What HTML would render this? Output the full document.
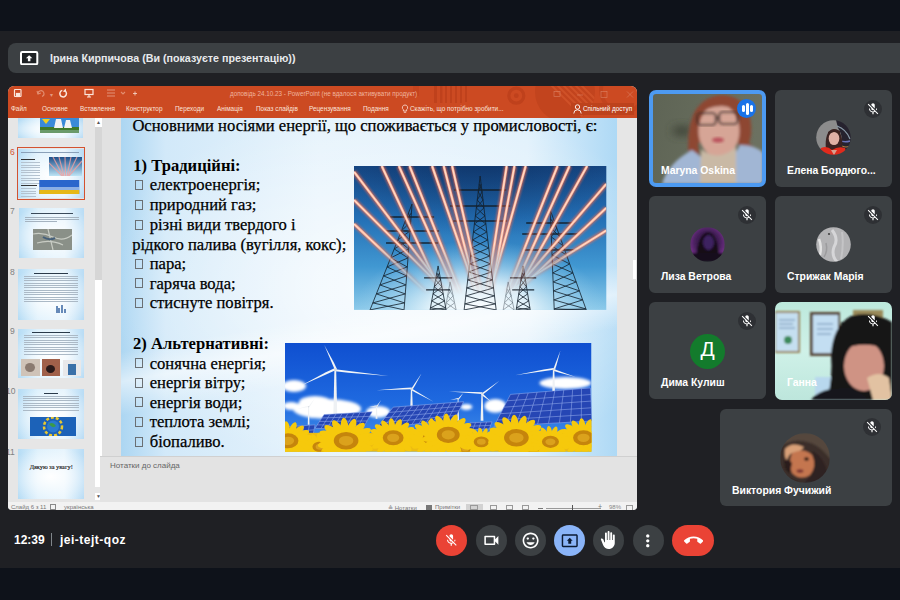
<!DOCTYPE html>
<html><head><meta charset="utf-8">
<style>
*{margin:0;padding:0;box-sizing:border-box}
html,body{width:900px;height:600px;overflow:hidden}
body{background:#1f2024;position:relative;font-family:"Liberation Sans",sans-serif}
.a{position:absolute}
.tile{position:absolute;background:#3c4043;border-radius:6px;overflow:hidden}
.nm{position:absolute;color:#fff;font-weight:bold;font-size:10.4px;white-space:nowrap;letter-spacing:0px}
.mute{position:absolute;width:18px;height:18px;border-radius:50%;background:#2e3034}
.btn{position:absolute;top:525px;width:31px;height:31px;border-radius:50%;background:#3c4043}
.rb{position:absolute;top:104px;font-size:6.4px;color:#fbe3da;white-space:nowrap}
.sl{position:absolute;font-family:"Liberation Serif",serif;font-size:16.6px;line-height:20px;color:#000;white-space:nowrap;-webkit-text-stroke:0.25px #000}
.bx{display:inline-block;width:10px;height:12px;border:1px solid #333;margin-right:6px;vertical-align:-1px}
</style></head><body>
<!-- top dark band -->
<div class="a" style="left:0;top:0;width:900px;height:31px;background:#0e121a"></div>
<!-- presenting banner -->
<div class="a" style="left:8px;top:43px;width:900px;height:30px;background:#3c4043;border-radius:8px"></div>
<svg class="a" style="left:20px;top:50.5px" width="18.5" height="14.5" viewBox="0 0 18.5 14.5">
  <rect x="1" y="1" width="16.3" height="12.3" rx="1.3" fill="#1e2124" stroke="#fff" stroke-width="2"/>
  <path d="M9.15 4.2 L5.9 7.3 H7.9 V10.3 H10.4 V7.3 H12.4 Z" fill="#fff"/>
</svg>
<div class="a" id="bnr" style="left:50px;top:52px;color:#e8eaed;font-size:10.7px;font-weight:bold;white-space:nowrap">Ірина Кирпичова (Ви (показуєте презентацію))</div>

<!-- PowerPoint window -->
<div class="a" id="ppt" style="left:8px;top:86px;width:629px;height:423.5px;background:#e6e6e6;border-radius:6px 6px 4px 4px;overflow:hidden">
  <!-- ribbon -->
  <div class="a" style="left:0;top:0;width:629px;height:32px;background:#cc4a22"></div>
  <!-- decorative circles right -->
  <svg class="a" style="left:0;top:0" width="629" height="32" viewBox="0 0 629 32">
    <defs><clipPath id="rc"><circle cx="557" cy="6" r="30"/></clipPath></defs>
    <g fill="#bf411c">
      <rect x="426" y="0" width="3" height="17"/><rect x="432" y="0" width="2.5" height="17"/><rect x="437" y="0" width="2" height="17"/>
      <rect x="442" y="0" width="2" height="17"/><rect x="447" y="0" width="2" height="17"/><rect x="452" y="0" width="2" height="17"/><rect x="457" y="0" width="2" height="16"/>
      <rect x="405" y="0" width="6" height="10" opacity="0.6"/>
    </g>
    <circle cx="508.3" cy="9.7" r="7.5" fill="none" stroke="#bf411c" stroke-width="3.2"/>
    <circle cx="508.3" cy="9.7" r="2.4" fill="#bf411c"/>
    <circle cx="557" cy="6" r="30" fill="#c2441e"/>
    <g clip-path="url(#rc)" stroke="#cf5128" stroke-width="2">
      <path d="M540 -10 L590 40 M546 -10 L596 40 M552 -10 L602 40 M558 -10 L608 40 M564 -10 L614 40 M534 -10 L584 40"/>
    </g>
    <circle cx="615" cy="4" r="22" fill="none" stroke="#c2441e" stroke-width="4"/>
  </svg>
  <!-- window controls -->
  <svg class="a" style="left:540px;top:4px" width="89" height="12" viewBox="0 0 89 12">
    <g fill="none" stroke="#e9a58c" stroke-width="0.7" opacity="0.55">
      <rect x="6" y="1.5" width="6" height="5"/>
      <line x1="29" y1="5" x2="35" y2="5"/>
      <rect x="53" y="1.5" width="6" height="6"/>
      <path d="M79 1.5 L85 7.5 M85 1.5 L79 7.5"/>
    </g>
  </svg>
  <!-- QAT icons -->
  <svg class="a" style="left:0;top:0" width="140" height="14" viewBox="0 0 140 14">
    <g fill="none" stroke="#fbe6dc" stroke-width="1.2">
      <rect x="6.5" y="3.5" width="6.5" height="7" rx="0.5"/>
      <rect x="8.5" y="7.5" width="3" height="3" fill="#fbe6dc"/>
      <path d="M57.2 5 A3.3 3.3 0 1 1 54.3 4.4" stroke-width="1.5"/>
      <path d="M57.8 2.6 L58.2 6.2 L54.8 5.4 Z" fill="#fbe6dc" stroke="none"/>
      <rect x="77" y="3.5" width="8" height="5"/>
      <path d="M81 8.5 V11 M79 11 H83"/>
    </g>
    <g fill="none" stroke="#e89f85" stroke-width="1.1" opacity="0.8">
      <path d="M30 8 a3 3 0 1 1 4 2.5"/><path d="M29 5 L30 8 L33 7"/>
      <line x1="99" y1="4" x2="107" y2="4"/><line x1="99" y1="7" x2="107" y2="7"/><line x1="99" y1="10" x2="107" y2="10"/>
      <path d="M113 6 l2 2 l2 -2"/>
    </g>
    <path d="M125 7.5 h4 M127 5.5 v4" stroke="#f3cfc1" stroke-width="0.9"/>
  </svg>
  <div class="a" style="left:42px;top:5px;font-size:6px;color:#e39a80">▾</div>
  <div class="a" style="left:222px;top:3.5px;font-size:6.3px;color:#f0b39c;white-space:nowrap">доповідь 24.10.23  -  PowerPoint (не вдалося активувати продукт)</div>
  <!-- menu row -->
  <div class="rb" style="left:3px;top:19px">Файл</div>
  <div class="rb" style="left:34px;top:19px">Основне</div>
  <div class="rb" style="left:72px;top:19px">Вставлення</div>
  <div class="rb" style="left:118px;top:19px">Конструктор</div>
  <div class="rb" style="left:167px;top:19px">Переходи</div>
  <div class="rb" style="left:209px;top:19px">Анімація</div>
  <div class="rb" style="left:248px;top:19px">Показ слайдів</div>
  <div class="rb" style="left:301px;top:19px">Рецензування</div>
  <div class="rb" style="left:355px;top:19px">Подання</div>
  <svg class="a" style="left:393px;top:18px" width="8" height="10" viewBox="0 0 8 10"><path d="M4 1 a2.6 2.6 0 0 1 1.6 4.7 V7 H2.4 V5.7 A2.6 2.6 0 0 1 4 1 Z M2.8 8.3 H5.2" fill="none" stroke="#fbe3da" stroke-width="0.8"/></svg>
  <div class="rb" style="left:402px;top:19px">Скажіть, що потрібно зробити...</div>
  <div class="a" style="left:563px;top:16.5px;width:63px;height:12px;background:#bd421c"></div>
  <svg class="a" style="left:565px;top:18px" width="9" height="10" viewBox="0 0 9 10"><circle cx="4.5" cy="3" r="2.2" fill="none" stroke="#fff" stroke-width="0.9"/><path d="M0.8 9.5 a3.7 3.7 0 0 1 7.4 0" fill="none" stroke="#fff" stroke-width="0.9"/></svg>
  <div class="rb" style="left:575px;top:19px;color:#fff">Спільний доступ</div>

  <!-- thumbnail pane -->
  <div class="a" style="left:0;top:32px;width:87px;height:384px;background:#e6e6e6"></div>
<!-- thumbs -->
  <div class="a" style="left:10.3px;top:32.0px;width:64.9px;height:19.5px;overflow:hidden;background:radial-gradient(ellipse 70% 60% at 50% 55%,#ffffff 0%,rgba(255,255,255,0) 100%),linear-gradient(90deg,#b5dcf5,#dcf0fc 30%,#e6f4fd 70%,#b8dcf5)"><svg class="a" style="left:22px;top:0" width="39" height="15" viewBox="0 0 39 15"><rect width="39" height="15" fill="#3a8ad8"/><rect y="9" width="39" height="6" fill="#3f7a2a"/><path d="M14 10 L16 1 H21 L23 10 Z M24 10 L26 2 H30 L32 10 Z" fill="#f2f2f2"/><path d="M2 1 L6 6 L10 1 Z" fill="#f0d020"/><rect y="12" width="39" height="3" fill="#6a9a6a"/></svg></div>
  <div class="a" style="left:8.8px;top:61.2px;width:68.4px;height:52.5px;border:1.6px solid #d35230"></div>
  <div class="a" style="left:10.4px;top:62.8px;width:65.2px;height:49.3px;overflow:hidden;background:radial-gradient(ellipse 70% 60% at 50% 55%,#ffffff 0%,rgba(255,255,255,0) 100%),linear-gradient(90deg,#b5dcf5,#dcf0fc 30%,#e6f4fd 70%,#b8dcf5)"><div class="a" style="left:3px;top:3.5px;width:58.0px;height:0.9px;background:#8aa0b8"></div><div class="a" style="left:3px;top:10.0px;width:14.0px;height:1.2px;background:#333"></div><div class="a" style="left:3px;top:13.5px;width:19.0px;height:0.7px;background:#b4c2cf"></div><div class="a" style="left:3px;top:16.1px;width:19.0px;height:0.7px;background:#b4c2cf"></div><div class="a" style="left:3px;top:18.6px;width:19.0px;height:0.7px;background:#b4c2cf"></div><div class="a" style="left:3px;top:21.1px;width:19.0px;height:0.7px;background:#b4c2cf"></div><div class="a" style="left:3px;top:23.7px;width:19.0px;height:0.7px;background:#b4c2cf"></div><div class="a" style="left:3px;top:26.2px;width:19.0px;height:0.7px;background:#b4c2cf"></div><div class="a" style="left:3px;top:28.8px;width:19.0px;height:0.7px;background:#b4c2cf"></div><div class="a" style="left:3px;top:31.3px;width:19.0px;height:0.7px;background:#b4c2cf"></div><div class="a" style="left:3px;top:33.9px;width:19.0px;height:0.7px;background:#b4c2cf"></div><div class="a" style="left:3px;top:36.0px;width:16.0px;height:1.2px;background:#333"></div><div class="a" style="left:3px;top:39.5px;width:15.0px;height:0.7px;background:#b4c2cf"></div><div class="a" style="left:3px;top:42.0px;width:15.0px;height:0.7px;background:#b4c2cf"></div><div class="a" style="left:3px;top:44.6px;width:15.0px;height:0.7px;background:#b4c2cf"></div><div class="a" style="left:3px;top:47.1px;width:15.0px;height:0.7px;background:#b4c2cf"></div><div class="a" style="left:3px;top:49.7px;width:15.0px;height:0.7px;background:#b4c2cf"></div><svg class="a" style="left:30.5px;top:8.5px" width="33" height="19" viewBox="0 0 33 19"><defs><linearGradient id="tg6" x1="0" y1="0" x2="0" y2="1"><stop offset="0" stop-color="#1d4f8a"/><stop offset="1" stop-color="#bde4f5"/></linearGradient></defs><rect width="33" height="19" fill="url(#tg6)"/><path d="M4 0 L14 19 M10 0 L15 19 M16 0 L16.5 19 M22 0 L18 19 M28 0 L19 19 M33 4 L20 19 M0 6 L13 19" stroke="#f0a0a0" stroke-width="1.2" opacity="0.8"/></svg><svg class="a" style="left:21px;top:31.5px" width="40.5" height="14" viewBox="0 0 40 14"><rect width="40" height="14" fill="#2a66cc"/><rect y="7" width="40" height="3" fill="#cde0f5" opacity="0.6"/><rect y="10" width="40" height="4" fill="#e6b818"/></svg></div>
  <div class="a" style="left:2px;top:60.5px;font-size:8.5px;color:#d35230">6</div>
  <div class="a" style="left:10.6px;top:122.0px;width:65.4px;height:50.0px;overflow:hidden;background:radial-gradient(ellipse 70% 60% at 50% 55%,#ffffff 0%,rgba(255,255,255,0) 100%),linear-gradient(90deg,#b5dcf5,#dcf0fc 30%,#e6f4fd 70%,#b8dcf5)"><div class="a" style="left:12px;top:5.0px;width:42.0px;height:1px;background:#3a4a5a"></div><div class="a" style="left:6px;top:8.5px;width:54.0px;height:0.7px;background:#a5b3c0"></div><div class="a" style="left:6px;top:10.9px;width:54.0px;height:0.7px;background:#a5b3c0"></div><div class="a" style="left:6px;top:13.3px;width:32.4px;height:0.7px;background:#a5b3c0"></div><svg class="a" style="left:14.5px;top:20.5px" width="39" height="21" viewBox="0 0 39 21"><rect width="39" height="21" fill="#8a9088"/><path d="M0 5 Q10 3 20 8 T39 6 M4 14 Q18 10 30 16 M15 0 L20 21" stroke="#c8ccc4" stroke-width="1.2" fill="none"/><path d="M10 8 Q16 12 22 9" stroke="#46607a" stroke-width="2" fill="none"/></svg></div>
  <div class="a" style="left:2px;top:120px;font-size:8.5px;color:#808080">7</div>
  <div class="a" style="left:10.4px;top:183.0px;width:65.6px;height:50.5px;overflow:hidden;background:radial-gradient(ellipse 70% 60% at 50% 55%,#ffffff 0%,rgba(255,255,255,0) 100%),linear-gradient(90deg,#b5dcf5,#dcf0fc 30%,#e6f4fd 70%,#b8dcf5)"><div class="a" style="left:16px;top:3.5px;width:34.0px;height:1px;background:#2a3a4a"></div><div class="a" style="left:6px;top:6.5px;width:54.0px;height:0.65px;background:#abb9c6"></div><div class="a" style="left:6px;top:8.8px;width:54.0px;height:0.65px;background:#abb9c6"></div><div class="a" style="left:6px;top:11.2px;width:54.0px;height:0.65px;background:#abb9c6"></div><div class="a" style="left:6px;top:13.6px;width:54.0px;height:0.65px;background:#abb9c6"></div><div class="a" style="left:6px;top:15.9px;width:54.0px;height:0.65px;background:#abb9c6"></div><div class="a" style="left:6px;top:18.2px;width:54.0px;height:0.65px;background:#abb9c6"></div><div class="a" style="left:6px;top:20.6px;width:54.0px;height:0.65px;background:#abb9c6"></div><div class="a" style="left:6px;top:22.9px;width:54.0px;height:0.65px;background:#abb9c6"></div><div class="a" style="left:6px;top:25.3px;width:54.0px;height:0.65px;background:#abb9c6"></div><div class="a" style="left:6px;top:27.7px;width:54.0px;height:0.65px;background:#abb9c6"></div><div class="a" style="left:6px;top:30.0px;width:54.0px;height:0.65px;background:#abb9c6"></div><div class="a" style="left:6px;top:32.4px;width:54.0px;height:0.65px;background:#abb9c6"></div><svg class="a" style="left:37px;top:35px" width="13" height="11" viewBox="0 0 13 11"><path d="M2 2 V9 M4 4 V9 M7 1 V9 M10 5 V9" stroke="#2a5a9a" stroke-width="1.4"/></svg></div>
  <div class="a" style="left:2px;top:180.5px;font-size:8.5px;color:#808080">8</div>
  <div class="a" style="left:10.4px;top:242.6px;width:65.6px;height:49.8px;overflow:hidden;background:radial-gradient(ellipse 70% 60% at 50% 55%,#ffffff 0%,rgba(255,255,255,0) 100%),linear-gradient(90deg,#b5dcf5,#dcf0fc 30%,#e6f4fd 70%,#b8dcf5)"><div class="a" style="left:14px;top:3.5px;width:38.0px;height:1px;background:#2a3a4a"></div><div class="a" style="left:6px;top:6.5px;width:54.0px;height:0.65px;background:#abb9c6"></div><div class="a" style="left:6px;top:8.8px;width:54.0px;height:0.65px;background:#abb9c6"></div><div class="a" style="left:6px;top:11.2px;width:54.0px;height:0.65px;background:#abb9c6"></div><div class="a" style="left:6px;top:13.6px;width:54.0px;height:0.65px;background:#abb9c6"></div><div class="a" style="left:6px;top:15.9px;width:54.0px;height:0.65px;background:#abb9c6"></div><div class="a" style="left:6px;top:18.2px;width:54.0px;height:0.65px;background:#abb9c6"></div><div class="a" style="left:6px;top:20.6px;width:54.0px;height:0.65px;background:#abb9c6"></div><div class="a" style="left:6px;top:22.9px;width:54.0px;height:0.65px;background:#abb9c6"></div><div class="a" style="left:6px;top:25.3px;width:54.0px;height:0.65px;background:#abb9c6"></div><div class="a" style="left:3px;top:30px;width:19px;height:17px;background:#cfc3b8"></div><div class="a" style="left:7px;top:34px;width:10px;height:9px;border-radius:50%;background:#8a7a70"></div><div class="a" style="left:24px;top:30px;width:18px;height:17px;background:#a0604a"></div><div class="a" style="left:28px;top:36px;width:9px;height:8px;border-radius:50%;background:#2a1a1a"></div><div class="a" style="left:45px;top:31px;width:18px;height:16px;background:#e8e8ea"></div><div class="a" style="left:50px;top:35px;width:8px;height:11px;background:#3a70a8"></div></div>
  <div class="a" style="left:2px;top:240px;font-size:8.5px;color:#808080">9</div>
  <div class="a" style="left:10.4px;top:303.0px;width:65.6px;height:50.0px;overflow:hidden;background:radial-gradient(ellipse 70% 60% at 50% 55%,#ffffff 0%,rgba(255,255,255,0) 100%),linear-gradient(90deg,#b5dcf5,#dcf0fc 30%,#e6f4fd 70%,#b8dcf5)"><div class="a" style="left:26px;top:3.5px;width:14.0px;height:1px;background:#2a3a4a"></div><div class="a" style="left:5px;top:6.5px;width:56.0px;height:0.65px;background:#abb9c6"></div><div class="a" style="left:5px;top:8.8px;width:56.0px;height:0.65px;background:#abb9c6"></div><div class="a" style="left:5px;top:11.2px;width:56.0px;height:0.65px;background:#abb9c6"></div><div class="a" style="left:5px;top:13.6px;width:56.0px;height:0.65px;background:#abb9c6"></div><div class="a" style="left:5px;top:15.9px;width:56.0px;height:0.65px;background:#abb9c6"></div><div class="a" style="left:5px;top:18.2px;width:56.0px;height:0.65px;background:#abb9c6"></div><div class="a" style="left:5px;top:20.6px;width:56.0px;height:0.65px;background:#abb9c6"></div><svg class="a" style="left:11.6px;top:27.8px" width="46" height="19" viewBox="0 0 46 19"><rect width="46" height="19" fill="#1c62b8"/><circle cx="23" cy="9.5" r="9" fill="none" stroke="#e8c830" stroke-width="2.5" stroke-dasharray="3 2"/><circle cx="23" cy="9.5" r="6" fill="#2a7ad0"/><path d="M19 7 Q23 4 26 9 Q22 12 19 7Z" fill="#3a9a4a"/></svg></div>
  <div class="a" style="left:-2px;top:300px;font-size:8.5px;color:#808080">10</div>
  <div class="a" style="left:10.4px;top:363.0px;width:65.6px;height:49.6px;overflow:hidden;background:radial-gradient(ellipse 70% 60% at 50% 55%,#ffffff 0%,rgba(255,255,255,0) 100%),linear-gradient(90deg,#b5dcf5,#dcf0fc 30%,#e6f4fd 70%,#b8dcf5)"><div class="a" style="left:0;top:14px;width:65.6px;text-align:center;font-family:'Liberation Serif',serif;font-size:6.3px;color:#1a1a1a;-webkit-text-stroke:0.15px #222;white-space:nowrap">Дякую за увагу!</div></div>
  <div class="a" style="left:-2px;top:360.5px;font-size:8.5px;color:#808080">11</div>
  <!-- /thumbs -->
  <!-- scrollbar -->
  <div class="a" style="left:87px;top:32px;width:7px;height:369px;background:#ffffff"></div>
  <div class="a" style="left:87px;top:41px;width:7px;height:153px;background:#d6d6d6"></div>
  <div class="a" style="left:87px;top:33px;width:7px;height:7px;background:#fff;font-size:5px;color:#555;text-align:center;line-height:7px">▲</div>
  <div class="a" style="left:87px;top:406.5px;width:7px;height:7px;background:#fff;font-size:5px;color:#555;text-align:center;line-height:7px">▼</div>
  <div class="a" style="left:94px;top:32px;width:19px;height:384px;background:#e1e1e1"></div>
  <!-- right gray + scrollbar -->
  <div class="a" style="left:609px;top:32px;width:20px;height:338px;background:#e6e6e6"></div>
  <div class="a" style="left:625px;top:174px;width:3px;height:19px;background:#fff"></div>
  <!-- notes -->
  <div class="a" style="left:92px;top:370px;width:537px;height:46px;background:#e3e3e3;border-top:1px solid #d0d0d0"></div>
  <div class="a" style="left:102px;top:375px;font-size:8px;color:#666;white-space:nowrap">Нотатки до слайда</div>
  <!-- status bar -->
  <div class="a" style="left:0;top:416px;width:629px;height:8px;background:#f2f2f2"></div>
  <div class="a" style="left:3px;top:417.5px;font-size:6px;color:#777;white-space:nowrap">Слайд 6 з 11</div>
  <div class="a" style="left:42px;top:418px;width:6px;height:6px;border:1px solid #888"></div>
  <div class="a" style="left:56px;top:417.5px;font-size:6px;color:#777;white-space:nowrap">українська</div>
  <div class="a" style="left:380px;top:418px;font-size:6px;color:#777;white-space:nowrap">≙ Нотатки</div>
  <div class="a" style="left:418px;top:419px;width:6px;height:5px;background:#777"></div>
  <div class="a" style="left:427px;top:418px;font-size:6px;color:#777;white-space:nowrap">Примітки</div>
  <div class="a" style="left:458px;top:418px;width:17px;height:8px;background:#d2d2d2"></div>
  <div class="a" style="left:462px;top:419px;width:8px;height:5px;border:1px solid #999"></div>
  <div class="a" style="left:482px;top:419px;width:7px;height:5px;border:1px solid #999"></div>
  <div class="a" style="left:498px;top:419px;width:7px;height:5px;border:1px solid #999"></div>
  <div class="a" style="left:514px;top:419px;width:7px;height:5px;border:1px solid #999"></div>
  <div class="a" style="left:530px;top:422px;width:5px;height:1px;background:#777"></div>
  <div class="a" style="left:538px;top:422px;width:55px;height:1px;background:#999"></div>
  <div class="a" style="left:564px;top:419px;width:1px;height:6px;background:#555"></div>
  <div class="a" style="left:590px;top:417px;font-size:7px;color:#777">+</div>
  <div class="a" style="left:601px;top:418px;font-size:6px;color:#888">98%</div>
  <div class="a" style="left:618px;top:419px;width:7px;height:6px;border:1px solid #999"></div>

  <!-- slide -->
  <div class="a" id="slide" style="left:113px;top:32px;width:496px;height:338px;overflow:hidden;
     background:linear-gradient(170deg,rgba(255,255,255,0) 55%,rgba(255,255,255,0.55) 62%,rgba(255,255,255,0) 70%),radial-gradient(ellipse 60% 55% at 55% 50%,rgba(255,255,255,0.75),rgba(255,255,255,0) 100%),linear-gradient(90deg,#acd6f2 0%,#d2e9f9 9%,#e6f3fc 40%,#e1f1fc 82%,#aed9f5 100%)">
    <div class="sl" style="left:11.4px;top:-1.8px;">Основними носіями енергії, що споживається у промисловості, є:</div>
    <div class="sl" style="left:12.3px;top:38.0px;font-weight:bold;-webkit-text-stroke:0;">1) Традиційні:</div>
    <div class="a" style="left:13.6px;top:62.0px;width:8px;height:10px;border:1px solid #6a6f73"></div>
    <div class="sl" style="left:28.7px;top:57.4px">електроенергія;</div>
    <div class="a" style="left:13.6px;top:81.8px;width:8px;height:10px;border:1px solid #6a6f73"></div>
    <div class="sl" style="left:28.7px;top:77.2px">природний газ;</div>
    <div class="a" style="left:13.6px;top:101.5px;width:8px;height:10px;border:1px solid #6a6f73"></div>
    <div class="sl" style="left:28.7px;top:96.9px">різні види твердого і</div>
    <div class="sl" style="left:11.2px;top:116.6px;">рідкого палива (вугілля, кокс);</div>
    <div class="a" style="left:13.6px;top:140.8px;width:8px;height:10px;border:1px solid #6a6f73"></div>
    <div class="sl" style="left:28.7px;top:136.2px">пара;</div>
    <div class="a" style="left:13.6px;top:160.4px;width:8px;height:10px;border:1px solid #6a6f73"></div>
    <div class="sl" style="left:28.7px;top:155.8px">гаряча вода;</div>
    <div class="a" style="left:13.6px;top:179.9px;width:8px;height:10px;border:1px solid #6a6f73"></div>
    <div class="sl" style="left:28.7px;top:175.3px">стиснуте повітря.</div>
    <div class="sl" style="left:12.0px;top:216.1px;font-weight:bold;-webkit-text-stroke:0;">2) Альтернативні:</div>
    <div class="a" style="left:13.6px;top:240.2px;width:8px;height:10px;border:1px solid #6a6f73"></div>
    <div class="sl" style="left:28.7px;top:235.6px">сонячна енергія;</div>
    <div class="a" style="left:13.6px;top:259.8px;width:8px;height:10px;border:1px solid #6a6f73"></div>
    <div class="sl" style="left:28.7px;top:255.2px">енергія вітру;</div>
    <div class="a" style="left:13.6px;top:279.4px;width:8px;height:10px;border:1px solid #6a6f73"></div>
    <div class="sl" style="left:28.7px;top:274.8px">енергія води;</div>
    <div class="a" style="left:13.6px;top:299.0px;width:8px;height:10px;border:1px solid #6a6f73"></div>
    <div class="sl" style="left:28.7px;top:294.4px">теплота землі;</div>
    <div class="a" style="left:13.6px;top:318.5px;width:8px;height:10px;border:1px solid #6a6f73"></div>
    <div class="sl" style="left:28.7px;top:313.9px">біопаливо.</div>
    <svg class="a" style="left:233.3px;top:48.4px" width="252.3" height="143.9" viewBox="0 0 252 144" preserveAspectRatio="none">
      <defs>
        <linearGradient id="sky1" x1="0" y1="0" x2="0" y2="1">
          <stop offset="0" stop-color="#164886"/>
          <stop offset="0.35" stop-color="#236eb4"/>
          <stop offset="0.7" stop-color="#4198d2"/>
          <stop offset="1" stop-color="#8ccaea"/>
        </linearGradient>
        <radialGradient id="glow1" cx="0.5" cy="1.02" r="0.5">
          <stop offset="0" stop-color="#ffffff" stop-opacity="1"/>
          <stop offset="0.4" stop-color="#f0f9fd" stop-opacity="0.85"/>
          <stop offset="1" stop-color="#9fd3ee" stop-opacity="0"/>
        </radialGradient>
        <radialGradient id="dk1" cx="0.5" cy="-0.1" r="0.6">
          <stop offset="0" stop-color="#061d45" stop-opacity="0.45"/>
          <stop offset="1" stop-color="#061d45" stop-opacity="0"/>
        </radialGradient>
        <linearGradient id="fade1" x1="0" y1="0" x2="0" y2="1">
          <stop offset="0" stop-color="#fff" stop-opacity="1"/>
          <stop offset="0.55" stop-color="#fff" stop-opacity="1"/>
          <stop offset="0.9" stop-color="#fff" stop-opacity="0"/>
        </linearGradient>
        <mask id="m1"><rect width="252" height="144" fill="url(#fade1)"/></mask>
        <filter id="bl" x="-20%" y="-20%" width="140%" height="140%"><feGaussianBlur stdDeviation="1.3"/></filter>
      </defs>
      <rect width="252" height="144" fill="url(#sky1)"/>
      <rect width="252" height="144" fill="url(#dk1)"/>
      <rect width="252" height="144" fill="url(#glow1)"/>
      <g stroke="#13202c" stroke-width="0.85" fill="none" opacity="0.95"><path d="M126 10 L110 144 M126 10 L142 144 M125.0 18.0 L127.9 26.0 M127.0 18.0 L124.1 26.0 M124.1 26.0 L128.9 34.0 M127.9 26.0 L123.1 34.0 M123.1 34.0 L129.8 42.0 M128.9 34.0 L122.2 42.0 M122.2 42.0 L130.8 50.0 M129.8 42.0 L121.2 50.0 M121.2 50.0 L131.7 58.0 M130.8 50.0 L120.3 58.0 M120.3 58.0 L132.7 66.0 M131.7 58.0 L119.3 66.0 M119.3 66.0 L133.6 74.0 M132.7 66.0 L118.4 74.0 M118.4 74.0 L134.6 82.0 M133.6 74.0 L117.4 82.0 M117.4 82.0 L135.6 90.0 M134.6 82.0 L116.4 90.0 M116.4 90.0 L136.5 98.0 M135.6 90.0 L115.5 98.0 M115.5 98.0 L137.5 106.0 M136.5 98.0 L114.5 106.0 M114.5 106.0 L138.4 114.0 M137.5 106.0 L113.6 114.0 M113.6 114.0 L139.4 122.0 M138.4 114.0 L112.6 122.0 M112.6 122.0 L140.3 130.0 M139.4 122.0 L111.7 130.0 M111.7 130.0 L141.3 138.0 M140.3 130.0 L110.7 138.0 M110.7 138.0 L142.0 144.0 M141.3 138.0 L110.0 144.0"/><path d="M100.0 24 H152.0 M96.0 40 H156.0 M99.0 55 H153.0" stroke-width="1.4"/><path d="M58 38 L16 144 M58 38 L50 144 M54.4 47.0 L56.6 56.0 M57.3 47.0 L50.9 56.0 M50.9 56.0 L56.0 65.0 M56.6 56.0 L47.3 65.0 M47.3 65.0 L55.3 74.0 M56.0 65.0 L43.7 74.0 M43.7 74.0 L54.6 83.0 M55.3 74.0 L40.2 83.0 M40.2 83.0 L53.9 92.0 M54.6 83.0 L36.6 92.0 M36.6 92.0 L53.2 101.0 M53.9 92.0 L33.0 101.0 M33.0 101.0 L52.6 110.0 M53.2 101.0 L29.5 110.0 M29.5 110.0 L51.9 119.0 M52.6 110.0 L25.9 119.0 M25.9 119.0 L51.2 128.0 M51.9 119.0 L22.3 128.0 M22.3 128.0 L50.5 137.0 M51.2 128.0 L18.8 137.0 M18.8 137.0 L50.0 144.0 M50.5 137.0 L16.0 144.0"/><path d="M36.0 51 H80.0 M31.0 65 H85.0 M32.0 77 H84.0" stroke-width="1.4"/><path d="M196 44 L200 144 M196 44 L232 144 M196.4 53.0 L202.5 62.0 M199.2 53.0 L196.7 62.0 M196.7 62.0 L205.7 71.0 M202.5 62.0 L197.1 71.0 M197.1 71.0 L209.0 80.0 M205.7 71.0 L197.4 80.0 M197.4 80.0 L212.2 89.0 M209.0 80.0 L197.8 89.0 M197.8 89.0 L215.4 98.0 M212.2 89.0 L198.2 98.0 M198.2 98.0 L218.7 107.0 M215.4 98.0 L198.5 107.0 M198.5 107.0 L221.9 116.0 M218.7 107.0 L198.9 116.0 M198.9 116.0 L225.2 125.0 M221.9 116.0 L199.2 125.0 M199.2 125.0 L228.4 134.0 M225.2 125.0 L199.6 134.0 M199.6 134.0 L231.6 143.0 M228.4 134.0 L200.0 143.0 M200.0 143.0 L232.0 144.0 M231.6 143.0 L200.0 144.0"/><path d="M172.0 57 H220.0 M168.0 68 H224.0 M170.0 84 H222.0" stroke-width="1.4"/><path d="M84 100 L76 144 M84 100 L92 144 M82.7 107.0 L86.5 114.0 M85.3 107.0 L81.5 114.0 M81.5 114.0 L87.8 121.0 M86.5 114.0 L80.2 121.0 M80.2 121.0 L89.1 128.0 M87.8 121.0 L78.9 128.0 M78.9 128.0 L90.4 135.0 M89.1 128.0 L77.6 135.0 M77.6 135.0 L91.6 142.0 M90.4 135.0 L76.4 142.0 M76.4 142.0 L92.0 144.0 M91.6 142.0 L76.0 144.0"/><path d="M70.0 112 H98.0 M72.0 124 H96.0" stroke-width="1.4"/><path d="M169 100 L162 144 M169 100 L176 144 M167.9 107.0 L171.2 114.0 M170.1 107.0 L166.8 114.0 M166.8 114.0 L172.3 121.0 M171.2 114.0 L165.7 121.0 M165.7 121.0 L173.5 128.0 M172.3 121.0 L164.5 128.0 M164.5 128.0 L174.6 135.0 M173.5 128.0 L163.4 135.0 M163.4 135.0 L175.7 142.0 M174.6 135.0 L162.3 142.0 M162.3 142.0 L176.0 144.0 M175.7 142.0 L162.0 144.0"/><path d="M156.0 112 H182.0 M158.0 124 H180.0" stroke-width="1.4"/><g opacity="0.45"><path d="M96 116 L91 144 M96 116 L102 144 M94.8 123.0 L99.0 130.0 M97.5 123.0 L93.5 130.0 M93.5 130.0 L100.5 137.0 M99.0 130.0 L92.2 137.0 M92.2 137.0 L102.0 144.0 M100.5 137.0 L91.0 144.0"/><path d="" stroke-width="1.4"/><path d="M154 116 L149 144 M154 116 L160 144 M152.8 123.0 L157.0 130.0 M155.5 123.0 L151.5 130.0 M151.5 130.0 L158.5 137.0 M157.0 130.0 L150.2 137.0 M150.2 137.0 L160.0 144.0 M158.5 137.0 L149.0 144.0"/><path d="" stroke-width="1.4"/></g></g>
      <g mask="url(#m1)">
        <path d="M0.0 5.7 L92.9 128 M0.0 34.0 L94.0 128 M0.0 58.0 L74.1 128 M27.7 0.0 L87.5 128 M44.8 0.0 L102.4 128 M55.5 0.0 L106.6 128 M78.0 0.0 L122.4 128 M89.6 0.0 L122.8 128 M98.0 0.0 L127.3 128 M152.5 0.0 L132.5 128 M160.3 0.0 L136.9 128 M171.5 0.0 L135.5 128 M203.3 0.0 L152.1 128 M215.3 0.0 L157.3 128 M232.9 0.0 L161.0 128 M252.0 18.0 L157.7 128 M252.0 42.0 L160.1 128 M252.0 64.5 L150.6 128" stroke="#ff6a48" stroke-width="5" opacity="0.6" filter="url(#bl)" fill="none"/>
        <path d="M0.0 5.7 L92.9 128 M0.0 34.0 L94.0 128 M0.0 58.0 L74.1 128 M27.7 0.0 L87.5 128 M44.8 0.0 L102.4 128 M55.5 0.0 L106.6 128 M78.0 0.0 L122.4 128 M89.6 0.0 L122.8 128 M98.0 0.0 L127.3 128 M152.5 0.0 L132.5 128 M160.3 0.0 L136.9 128 M171.5 0.0 L135.5 128 M203.3 0.0 L152.1 128 M215.3 0.0 L157.3 128 M232.9 0.0 L161.0 128 M252.0 18.0 L157.7 128 M252.0 42.0 L160.1 128 M252.0 64.5 L150.6 128" stroke="#ffb89c" stroke-width="2.5" fill="none"/>
        <path d="M0.0 5.7 L92.9 128 M0.0 34.0 L94.0 128 M0.0 58.0 L74.1 128 M27.7 0.0 L87.5 128 M44.8 0.0 L102.4 128 M55.5 0.0 L106.6 128 M78.0 0.0 L122.4 128 M89.6 0.0 L122.8 128 M98.0 0.0 L127.3 128 M152.5 0.0 L132.5 128 M160.3 0.0 L136.9 128 M171.5 0.0 L135.5 128 M203.3 0.0 L152.1 128 M215.3 0.0 L157.3 128 M232.9 0.0 L161.0 128 M252.0 18.0 L157.7 128 M252.0 42.0 L160.1 128 M252.0 64.5 L150.6 128" stroke="#fff2ea" stroke-width="0.8" fill="none" opacity="0.85"/>
      </g>
    </svg>
    <svg class="a" style="left:164.3px;top:224.8px" width="306.5" height="108.8" viewBox="0 0 306 109" preserveAspectRatio="none">
      <defs>
        <linearGradient id="sky2" x1="0" y1="0" x2="0" y2="1">
          <stop offset="0" stop-color="#0f4fd0"/>
          <stop offset="0.55" stop-color="#1f6ae0"/>
          <stop offset="1" stop-color="#4a96ea"/>
        </linearGradient>
        <filter id="cb" x="-30%" y="-50%" width="160%" height="200%"><feGaussianBlur stdDeviation="1.6"/></filter>
        <clipPath id="wc"><rect width="306" height="109"/></clipPath>
      </defs>
      <g clip-path="url(#wc)">
      <rect width="306" height="109" fill="url(#sky2)"/>
      <g fill="#ffffff" filter="url(#cb)">
        <ellipse cx="9" cy="43" rx="12" ry="6"/>
        <ellipse cx="42" cy="66" rx="34" ry="10"/>
        <ellipse cx="30" cy="59" rx="16" ry="6"/>
        <ellipse cx="6" cy="63" rx="8" ry="4"/>
        <ellipse cx="93" cy="69" rx="12" ry="6"/>
        <ellipse cx="210" cy="63" rx="11" ry="7"/>
        <ellipse cx="280" cy="40" rx="26" ry="6"/>
        <ellipse cx="181" cy="64" rx="6" ry="3"/>
      </g>
      <path d="M48.3 71 L49.3 26.7 L51.1 26.7 L52.1 71 Z" fill="#eef1f4"/><path d="M51.8 26.0 L48.9 19.9 L39.2 2.0 L49.7 26.9 Z" fill="#f3f5f7"/><path d="M50.0 28.4 L63.3 29.8 L103.4 33.1 L50.3 26.2 Z" fill="#f3f5f7"/><path d="M49.5 25.2 L40.8 29.4 L15.3 43.2 L50.4 27.2 Z" fill="#f3f5f7"/><circle cx="50.2" cy="26.7" r="1.5" fill="#d8dde2"/><path d="M124.9 70 L125.7 46 L126.9 46 L127.7 70 Z" fill="#eef1f4"/><path d="M127.4 46.7 L129.8 42.7 L136.4 30.4 L126.0 45.8 Z" fill="#f3f5f7"/><path d="M126.3 44.7 L117.6 45.2 L91.5 47.3 L126.3 46.4 Z" fill="#f3f5f7"/><path d="M125.7 47.1 L131.2 50.2 L148.3 58.8 L126.5 45.7 Z" fill="#f3f5f7"/><circle cx="126.3" cy="46" r="1.1" fill="#d8dde2"/><path d="M195.3 78 L196.1 50.6 L197.3 50.6 L198.1 78 Z" fill="#eef1f4"/><path d="M197.5 51.6 L201.7 48.3 L214.1 37.7 L196.5 50.3 Z" fill="#f3f5f7"/><path d="M196.8 49.3 L188.5 49.0 L163.6 48.7 L196.7 51.0 Z" fill="#f3f5f7"/><path d="M195.9 51.5 L198.2 53.5 L205.8 58.8 L197.0 50.3 Z" fill="#f3f5f7"/><circle cx="196.7" cy="50.6" r="1.1" fill="#d8dde2"/><path d="M266.6 60 L267.5 26.4 L268.9 26.4 L269.8 60 Z" fill="#eef1f4"/><path d="M269.6 26.9 L271.1 22.1 L275.0 7.5 L267.8 26.3 Z" fill="#f3f5f7"/><path d="M268.0 25.0 L258.4 26.6 L229.7 32.2 L268.3 26.8 Z" fill="#f3f5f7"/><path d="M267.7 27.8 L273.3 29.5 L290.2 34.0 L268.3 26.0 Z" fill="#f3f5f7"/><circle cx="268.2" cy="26.4" r="1.3" fill="#d8dde2"/><path d="M22.7 82 L23.2 63.8 L24.0 63.8 L24.5 82 Z" fill="#eef1f4"/><path d="M24.3 64.3 L25.8 62.0 L30.0 55.0 L23.4 63.7 Z" fill="#f3f5f7"/><path d="M23.4 63.0 L20.6 63.6 L12.0 66.0 L23.6 64.0 Z" fill="#f3f5f7"/><circle cx="23.6" cy="63.8" r="0.7" fill="#d8dde2"/><path d="M90.5 76 L91.0 63.4 L91.8 63.4 L92.3 76 Z" fill="#eef1f4"/><path d="M92.1 63.9 L93.1 62.2 L96.0 57.0 L91.2 63.3 Z" fill="#f3f5f7"/><path d="M91.3 62.6 L89.5 62.8 L84.0 64.0 L91.4 63.6 Z" fill="#f3f5f7"/><circle cx="91.4" cy="63.4" r="0.7" fill="#d8dde2"/><path d="M171.9 78 L172.4 56 L173.2 56 L173.7 78 Z" fill="#eef1f4"/><path d="M173.4 56.5 L174.7 55.0 L178.0 50.0 L172.6 55.8 Z" fill="#f3f5f7"/><path d="M172.7 55.2 L170.8 55.5 L165.0 57.0 L172.8 56.2 Z" fill="#f3f5f7"/><circle cx="172.8" cy="56" r="0.7" fill="#d8dde2"/>
      <path d="M2 84 L30 82 L28 92 L0 94 Z" fill="#2646b4"/><path d="M2.0 84.0 L0.0 94.0 M7.6 83.6 L5.6 93.6 M13.2 83.2 L11.2 93.2 M18.8 82.8 L16.8 92.8 M24.4 82.4 L22.4 92.4 M30.0 82.0 L28.0 92.0 M2.0 84.0 L30.0 82.0 M1.0 89.0 L29.0 87.0 M0.0 94.0 L28.0 92.0" stroke="#95acec" stroke-width="0.55" fill="none"/><path d="M39 71.7 L87 68.9 L76.8 87.3 L30 85.4 Z" fill="#2646b4"/><path d="M39.0 71.7 L30.0 85.4 M45.0 71.4 L35.9 85.6 M51.0 71.0 L41.7 85.9 M57.0 70.7 L47.5 86.1 M63.0 70.3 L53.4 86.3 M69.0 70.0 L59.2 86.6 M75.0 69.6 L65.1 86.8 M81.0 69.2 L70.9 87.1 M87.0 68.9 L76.8 87.3 M39.0 71.7 L87.0 68.9 M36.8 75.1 L84.5 73.5 M34.5 78.6 L81.9 78.1 M32.2 82.0 L79.3 82.7 M30.0 85.4 L76.8 87.3" stroke="#95acec" stroke-width="0.55" fill="none"/><path d="M108 64.3 L178.3 58.8 L169 77 L91.4 85.4 Z" fill="#2646b4"/><path d="M108.0 64.3 L91.4 85.4 M114.4 63.8 L98.5 84.6 M120.8 63.3 L105.5 83.9 M127.2 62.8 L112.6 83.1 M133.6 62.3 L119.6 82.3 M140.0 61.8 L126.7 81.6 M146.3 61.3 L133.7 80.8 M152.7 60.8 L140.8 80.1 M159.1 60.3 L147.8 79.3 M165.5 59.8 L154.9 78.5 M171.9 59.3 L161.9 77.8 M178.3 58.8 L169.0 77.0 M108.0 64.3 L178.3 58.8 M103.8 69.6 L176.0 63.3 M99.7 74.8 L173.7 67.9 M95.6 80.1 L171.3 72.5 M91.4 85.4 L169.0 77.0" stroke="#95acec" stroke-width="0.55" fill="none"/><path d="M225.1 51.5 L304.9 45 L306.7 78.1 L208.6 83.6 Z" fill="#2646b4"/><path d="M225.1 51.5 L208.6 83.6 M234.0 50.8 L219.5 83.0 M242.8 50.1 L230.4 82.4 M251.7 49.3 L241.3 81.8 M260.6 48.6 L252.2 81.2 M269.4 47.9 L263.1 80.5 M278.3 47.2 L274.0 79.9 M287.2 46.4 L284.9 79.3 M296.0 45.7 L295.8 78.7 M304.9 45.0 L306.7 78.1 M225.1 51.5 L304.9 45.0 M221.8 57.9 L305.3 51.6 M218.5 64.3 L305.6 58.2 M215.2 70.8 L306.0 64.9 M211.9 77.2 L306.3 71.5 M208.6 83.6 L306.7 78.1" stroke="#95acec" stroke-width="0.55" fill="none"/><path d="M184.7 80 L206.7 79 L204 86 L182 87 Z" fill="#2646b4"/><path d="M184.7 80.0 L182.0 87.0 M190.2 79.8 L187.5 86.8 M195.7 79.5 L193.0 86.5 M201.2 79.2 L198.5 86.2 M206.7 79.0 L204.0 86.0 M184.7 80.0 L206.7 79.0 M183.3 83.5 L205.3 82.5 M182.0 87.0 L204.0 86.0" stroke="#95acec" stroke-width="0.55" fill="none"/>
      <rect x="0" y="90" width="306" height="19" fill="#ecbc12"/>
      <ellipse cx="46.5" cy="104.8" rx="6.2" ry="2.4" transform="rotate(4 46.5 104.8)" fill="#f6c90c"/><ellipse cx="45.4" cy="107.5" rx="6.2" ry="2.4" transform="rotate(18 45.4 107.5)" fill="#f6c90c"/><ellipse cx="43.1" cy="109.7" rx="6.2" ry="2.4" transform="rotate(35 43.1 109.7)" fill="#f6c90c"/><ellipse cx="39.8" cy="111.3" rx="6.2" ry="2.4" transform="rotate(57 39.8 111.3)" fill="#f6c90c"/><ellipse cx="35.9" cy="112.0" rx="6.2" ry="2.4" transform="rotate(84 35.9 112.0)" fill="#f6c90c"/><ellipse cx="31.9" cy="111.7" rx="6.2" ry="2.4" transform="rotate(112 31.9 111.7)" fill="#f6c90c"/><ellipse cx="28.2" cy="110.5" rx="6.2" ry="2.4" transform="rotate(136 28.2 110.5)" fill="#f6c90c"/><ellipse cx="25.4" cy="108.5" rx="6.2" ry="2.4" transform="rotate(155 25.4 108.5)" fill="#f6c90c"/><ellipse cx="23.8" cy="106.0" rx="6.2" ry="2.4" transform="rotate(170 23.8 106.0)" fill="#f6c90c"/><ellipse cx="23.5" cy="103.2" rx="6.2" ry="2.4" transform="rotate(-176 23.5 103.2)" fill="#f6c90c"/><ellipse cx="24.6" cy="100.5" rx="6.2" ry="2.4" transform="rotate(-162 24.6 100.5)" fill="#f6c90c"/><ellipse cx="26.9" cy="98.3" rx="6.2" ry="2.4" transform="rotate(-145 26.9 98.3)" fill="#f6c90c"/><ellipse cx="30.2" cy="96.7" rx="6.2" ry="2.4" transform="rotate(-123 30.2 96.7)" fill="#f6c90c"/><ellipse cx="34.1" cy="96.0" rx="6.2" ry="2.4" transform="rotate(-96 34.1 96.0)" fill="#f6c90c"/><ellipse cx="38.1" cy="96.3" rx="6.2" ry="2.4" transform="rotate(-68 38.1 96.3)" fill="#f6c90c"/><ellipse cx="41.8" cy="97.5" rx="6.2" ry="2.4" transform="rotate(-44 41.8 97.5)" fill="#f6c90c"/><ellipse cx="44.6" cy="99.5" rx="6.2" ry="2.4" transform="rotate(-25 44.6 99.5)" fill="#f6c90c"/><ellipse cx="46.2" cy="102.0" rx="6.2" ry="2.4" transform="rotate(-10 46.2 102.0)" fill="#f6c90c"/><ellipse cx="35" cy="104" rx="7.6" ry="5.4" fill="#c5850c"/><ellipse cx="35" cy="104" rx="4.4" ry="3.0" fill="#dba21c"/><ellipse cx="190.1" cy="106.7" rx="5.5" ry="2.1" transform="rotate(4 190.1 106.7)" fill="#f6c90c"/><ellipse cx="189.1" cy="109.0" rx="5.5" ry="2.1" transform="rotate(18 189.1 109.0)" fill="#f6c90c"/><ellipse cx="187.1" cy="111.0" rx="5.5" ry="2.1" transform="rotate(35 187.1 111.0)" fill="#f6c90c"/><ellipse cx="184.2" cy="112.4" rx="5.5" ry="2.1" transform="rotate(57 184.2 112.4)" fill="#f6c90c"/><ellipse cx="180.8" cy="113.0" rx="5.5" ry="2.1" transform="rotate(84 180.8 113.0)" fill="#f6c90c"/><ellipse cx="177.2" cy="112.7" rx="5.5" ry="2.1" transform="rotate(112 177.2 112.7)" fill="#f6c90c"/><ellipse cx="174.1" cy="111.7" rx="5.5" ry="2.1" transform="rotate(136 174.1 111.7)" fill="#f6c90c"/><ellipse cx="171.6" cy="109.9" rx="5.5" ry="2.1" transform="rotate(155 171.6 109.9)" fill="#f6c90c"/><ellipse cx="170.2" cy="107.7" rx="5.5" ry="2.1" transform="rotate(170 170.2 107.7)" fill="#f6c90c"/><ellipse cx="169.9" cy="105.3" rx="5.5" ry="2.1" transform="rotate(-176 169.9 105.3)" fill="#f6c90c"/><ellipse cx="170.9" cy="103.0" rx="5.5" ry="2.1" transform="rotate(-162 170.9 103.0)" fill="#f6c90c"/><ellipse cx="172.9" cy="101.0" rx="5.5" ry="2.1" transform="rotate(-145 172.9 101.0)" fill="#f6c90c"/><ellipse cx="175.8" cy="99.6" rx="5.5" ry="2.1" transform="rotate(-123 175.8 99.6)" fill="#f6c90c"/><ellipse cx="179.2" cy="99.0" rx="5.5" ry="2.1" transform="rotate(-96 179.2 99.0)" fill="#f6c90c"/><ellipse cx="182.8" cy="99.3" rx="5.5" ry="2.1" transform="rotate(-68 182.8 99.3)" fill="#f6c90c"/><ellipse cx="185.9" cy="100.3" rx="5.5" ry="2.1" transform="rotate(-44 185.9 100.3)" fill="#f6c90c"/><ellipse cx="188.4" cy="102.1" rx="5.5" ry="2.1" transform="rotate(-25 188.4 102.1)" fill="#f6c90c"/><ellipse cx="189.8" cy="104.3" rx="5.5" ry="2.1" transform="rotate(-10 189.8 104.3)" fill="#f6c90c"/><ellipse cx="180" cy="106" rx="6.6" ry="4.8" fill="#c5850c"/><ellipse cx="180" cy="106" rx="3.9" ry="2.7" fill="#dba21c"/><ellipse cx="258.1" cy="106.7" rx="5.5" ry="2.1" transform="rotate(4 258.1 106.7)" fill="#f6c90c"/><ellipse cx="257.1" cy="109.0" rx="5.5" ry="2.1" transform="rotate(18 257.1 109.0)" fill="#f6c90c"/><ellipse cx="255.1" cy="111.0" rx="5.5" ry="2.1" transform="rotate(35 255.1 111.0)" fill="#f6c90c"/><ellipse cx="252.2" cy="112.4" rx="5.5" ry="2.1" transform="rotate(57 252.2 112.4)" fill="#f6c90c"/><ellipse cx="248.8" cy="113.0" rx="5.5" ry="2.1" transform="rotate(84 248.8 113.0)" fill="#f6c90c"/><ellipse cx="245.2" cy="112.7" rx="5.5" ry="2.1" transform="rotate(112 245.2 112.7)" fill="#f6c90c"/><ellipse cx="242.1" cy="111.7" rx="5.5" ry="2.1" transform="rotate(136 242.1 111.7)" fill="#f6c90c"/><ellipse cx="239.6" cy="109.9" rx="5.5" ry="2.1" transform="rotate(155 239.6 109.9)" fill="#f6c90c"/><ellipse cx="238.2" cy="107.7" rx="5.5" ry="2.1" transform="rotate(170 238.2 107.7)" fill="#f6c90c"/><ellipse cx="237.9" cy="105.3" rx="5.5" ry="2.1" transform="rotate(-176 237.9 105.3)" fill="#f6c90c"/><ellipse cx="238.9" cy="103.0" rx="5.5" ry="2.1" transform="rotate(-162 238.9 103.0)" fill="#f6c90c"/><ellipse cx="240.9" cy="101.0" rx="5.5" ry="2.1" transform="rotate(-145 240.9 101.0)" fill="#f6c90c"/><ellipse cx="243.8" cy="99.6" rx="5.5" ry="2.1" transform="rotate(-123 243.8 99.6)" fill="#f6c90c"/><ellipse cx="247.2" cy="99.0" rx="5.5" ry="2.1" transform="rotate(-96 247.2 99.0)" fill="#f6c90c"/><ellipse cx="250.8" cy="99.3" rx="5.5" ry="2.1" transform="rotate(-68 250.8 99.3)" fill="#f6c90c"/><ellipse cx="253.9" cy="100.3" rx="5.5" ry="2.1" transform="rotate(-44 253.9 100.3)" fill="#f6c90c"/><ellipse cx="256.4" cy="102.1" rx="5.5" ry="2.1" transform="rotate(-25 256.4 102.1)" fill="#f6c90c"/><ellipse cx="257.8" cy="104.3" rx="5.5" ry="2.1" transform="rotate(-10 257.8 104.3)" fill="#f6c90c"/><ellipse cx="248" cy="106" rx="6.6" ry="4.8" fill="#c5850c"/><ellipse cx="248" cy="106" rx="3.9" ry="2.7" fill="#dba21c"/><ellipse cx="313.9" cy="96.1" rx="8.6" ry="3.3" transform="rotate(4 313.9 96.1)" fill="#f6c90c"/><ellipse cx="312.4" cy="99.8" rx="8.6" ry="3.3" transform="rotate(18 312.4 99.8)" fill="#f6c90c"/><ellipse cx="309.1" cy="102.9" rx="8.6" ry="3.3" transform="rotate(35 309.1 102.9)" fill="#f6c90c"/><ellipse cx="304.6" cy="105.0" rx="8.6" ry="3.3" transform="rotate(57 304.6 105.0)" fill="#f6c90c"/><ellipse cx="299.2" cy="106.0" rx="8.6" ry="3.3" transform="rotate(84 299.2 106.0)" fill="#f6c90c"/><ellipse cx="293.7" cy="105.6" rx="8.6" ry="3.3" transform="rotate(112 293.7 105.6)" fill="#f6c90c"/><ellipse cx="288.7" cy="103.9" rx="8.6" ry="3.3" transform="rotate(136 288.7 103.9)" fill="#f6c90c"/><ellipse cx="284.8" cy="101.2" rx="8.6" ry="3.3" transform="rotate(155 284.8 101.2)" fill="#f6c90c"/><ellipse cx="282.5" cy="97.7" rx="8.6" ry="3.3" transform="rotate(170 282.5 97.7)" fill="#f6c90c"/><ellipse cx="282.1" cy="93.9" rx="8.6" ry="3.3" transform="rotate(-176 282.1 93.9)" fill="#f6c90c"/><ellipse cx="283.6" cy="90.2" rx="8.6" ry="3.3" transform="rotate(-162 283.6 90.2)" fill="#f6c90c"/><ellipse cx="286.9" cy="87.1" rx="8.6" ry="3.3" transform="rotate(-145 286.9 87.1)" fill="#f6c90c"/><ellipse cx="291.4" cy="85.0" rx="8.6" ry="3.3" transform="rotate(-123 291.4 85.0)" fill="#f6c90c"/><ellipse cx="296.8" cy="84.0" rx="8.6" ry="3.3" transform="rotate(-96 296.8 84.0)" fill="#f6c90c"/><ellipse cx="302.3" cy="84.4" rx="8.6" ry="3.3" transform="rotate(-68 302.3 84.4)" fill="#f6c90c"/><ellipse cx="307.3" cy="86.1" rx="8.6" ry="3.3" transform="rotate(-44 307.3 86.1)" fill="#f6c90c"/><ellipse cx="311.2" cy="88.8" rx="8.6" ry="3.3" transform="rotate(-25 311.2 88.8)" fill="#f6c90c"/><ellipse cx="313.5" cy="92.3" rx="8.6" ry="3.3" transform="rotate(-10 313.5 92.3)" fill="#f6c90c"/><ellipse cx="298" cy="95" rx="10.4" ry="7.5" fill="#c5850c"/><ellipse cx="298" cy="95" rx="6.1" ry="4.2" fill="#dba21c"/><ellipse cx="18.9" cy="99.1" rx="8.6" ry="3.3" transform="rotate(4 18.9 99.1)" fill="#f6c90c"/><ellipse cx="17.4" cy="102.8" rx="8.6" ry="3.3" transform="rotate(18 17.4 102.8)" fill="#f6c90c"/><ellipse cx="14.1" cy="105.9" rx="8.6" ry="3.3" transform="rotate(35 14.1 105.9)" fill="#f6c90c"/><ellipse cx="9.6" cy="108.0" rx="8.6" ry="3.3" transform="rotate(57 9.6 108.0)" fill="#f6c90c"/><ellipse cx="4.2" cy="109.0" rx="8.6" ry="3.3" transform="rotate(84 4.2 109.0)" fill="#f6c90c"/><ellipse cx="-1.3" cy="108.6" rx="8.6" ry="3.3" transform="rotate(112 -1.3 108.6)" fill="#f6c90c"/><ellipse cx="-6.3" cy="106.9" rx="8.6" ry="3.3" transform="rotate(136 -6.3 106.9)" fill="#f6c90c"/><ellipse cx="-10.2" cy="104.2" rx="8.6" ry="3.3" transform="rotate(155 -10.2 104.2)" fill="#f6c90c"/><ellipse cx="-12.5" cy="100.7" rx="8.6" ry="3.3" transform="rotate(170 -12.5 100.7)" fill="#f6c90c"/><ellipse cx="-12.9" cy="96.9" rx="8.6" ry="3.3" transform="rotate(-176 -12.9 96.9)" fill="#f6c90c"/><ellipse cx="-11.4" cy="93.2" rx="8.6" ry="3.3" transform="rotate(-162 -11.4 93.2)" fill="#f6c90c"/><ellipse cx="-8.1" cy="90.1" rx="8.6" ry="3.3" transform="rotate(-145 -8.1 90.1)" fill="#f6c90c"/><ellipse cx="-3.6" cy="88.0" rx="8.6" ry="3.3" transform="rotate(-123 -3.6 88.0)" fill="#f6c90c"/><ellipse cx="1.8" cy="87.0" rx="8.6" ry="3.3" transform="rotate(-96 1.8 87.0)" fill="#f6c90c"/><ellipse cx="7.3" cy="87.4" rx="8.6" ry="3.3" transform="rotate(-68 7.3 87.4)" fill="#f6c90c"/><ellipse cx="12.3" cy="89.1" rx="8.6" ry="3.3" transform="rotate(-44 12.3 89.1)" fill="#f6c90c"/><ellipse cx="16.2" cy="91.8" rx="8.6" ry="3.3" transform="rotate(-25 16.2 91.8)" fill="#f6c90c"/><ellipse cx="18.5" cy="95.3" rx="8.6" ry="3.3" transform="rotate(-10 18.5 95.3)" fill="#f6c90c"/><ellipse cx="3" cy="98" rx="10.4" ry="7.5" fill="#c5850c"/><ellipse cx="3" cy="98" rx="6.1" ry="4.2" fill="#dba21c"/><ellipse cx="79.8" cy="99.3" rx="10.1" ry="3.9" transform="rotate(4 79.8 99.3)" fill="#f6c90c"/><ellipse cx="78.0" cy="103.6" rx="10.1" ry="3.9" transform="rotate(18 78.0 103.6)" fill="#f6c90c"/><ellipse cx="74.2" cy="107.3" rx="10.1" ry="3.9" transform="rotate(35 74.2 107.3)" fill="#f6c90c"/><ellipse cx="68.7" cy="109.9" rx="10.1" ry="3.9" transform="rotate(57 68.7 109.9)" fill="#f6c90c"/><ellipse cx="62.4" cy="111.0" rx="10.1" ry="3.9" transform="rotate(84 62.4 111.0)" fill="#f6c90c"/><ellipse cx="55.9" cy="110.5" rx="10.1" ry="3.9" transform="rotate(112 55.9 110.5)" fill="#f6c90c"/><ellipse cx="50.0" cy="108.6" rx="10.1" ry="3.9" transform="rotate(136 50.0 108.6)" fill="#f6c90c"/><ellipse cx="45.4" cy="105.3" rx="10.1" ry="3.9" transform="rotate(155 45.4 105.3)" fill="#f6c90c"/><ellipse cx="42.7" cy="101.2" rx="10.1" ry="3.9" transform="rotate(170 42.7 101.2)" fill="#f6c90c"/><ellipse cx="42.2" cy="96.7" rx="10.1" ry="3.9" transform="rotate(-176 42.2 96.7)" fill="#f6c90c"/><ellipse cx="44.0" cy="92.4" rx="10.1" ry="3.9" transform="rotate(-162 44.0 92.4)" fill="#f6c90c"/><ellipse cx="47.8" cy="88.7" rx="10.1" ry="3.9" transform="rotate(-145 47.8 88.7)" fill="#f6c90c"/><ellipse cx="53.3" cy="86.1" rx="10.1" ry="3.9" transform="rotate(-123 53.3 86.1)" fill="#f6c90c"/><ellipse cx="59.6" cy="85.0" rx="10.1" ry="3.9" transform="rotate(-96 59.6 85.0)" fill="#f6c90c"/><ellipse cx="66.1" cy="85.5" rx="10.1" ry="3.9" transform="rotate(-68 66.1 85.5)" fill="#f6c90c"/><ellipse cx="72.0" cy="87.4" rx="10.1" ry="3.9" transform="rotate(-44 72.0 87.4)" fill="#f6c90c"/><ellipse cx="76.6" cy="90.7" rx="10.1" ry="3.9" transform="rotate(-25 76.6 90.7)" fill="#f6c90c"/><ellipse cx="79.3" cy="94.8" rx="10.1" ry="3.9" transform="rotate(-10 79.3 94.8)" fill="#f6c90c"/><ellipse cx="61" cy="98" rx="12.3" ry="8.8" fill="#c5850c"/><ellipse cx="61" cy="98" rx="7.2" ry="4.9" fill="#dba21c"/><ellipse cx="123.9" cy="96.1" rx="8.6" ry="3.3" transform="rotate(4 123.9 96.1)" fill="#f6c90c"/><ellipse cx="122.4" cy="99.8" rx="8.6" ry="3.3" transform="rotate(18 122.4 99.8)" fill="#f6c90c"/><ellipse cx="119.1" cy="102.9" rx="8.6" ry="3.3" transform="rotate(35 119.1 102.9)" fill="#f6c90c"/><ellipse cx="114.6" cy="105.0" rx="8.6" ry="3.3" transform="rotate(57 114.6 105.0)" fill="#f6c90c"/><ellipse cx="109.2" cy="106.0" rx="8.6" ry="3.3" transform="rotate(84 109.2 106.0)" fill="#f6c90c"/><ellipse cx="103.7" cy="105.6" rx="8.6" ry="3.3" transform="rotate(112 103.7 105.6)" fill="#f6c90c"/><ellipse cx="98.7" cy="103.9" rx="8.6" ry="3.3" transform="rotate(136 98.7 103.9)" fill="#f6c90c"/><ellipse cx="94.8" cy="101.2" rx="8.6" ry="3.3" transform="rotate(155 94.8 101.2)" fill="#f6c90c"/><ellipse cx="92.5" cy="97.7" rx="8.6" ry="3.3" transform="rotate(170 92.5 97.7)" fill="#f6c90c"/><ellipse cx="92.1" cy="93.9" rx="8.6" ry="3.3" transform="rotate(-176 92.1 93.9)" fill="#f6c90c"/><ellipse cx="93.6" cy="90.2" rx="8.6" ry="3.3" transform="rotate(-162 93.6 90.2)" fill="#f6c90c"/><ellipse cx="96.9" cy="87.1" rx="8.6" ry="3.3" transform="rotate(-145 96.9 87.1)" fill="#f6c90c"/><ellipse cx="101.4" cy="85.0" rx="8.6" ry="3.3" transform="rotate(-123 101.4 85.0)" fill="#f6c90c"/><ellipse cx="106.8" cy="84.0" rx="8.6" ry="3.3" transform="rotate(-96 106.8 84.0)" fill="#f6c90c"/><ellipse cx="112.3" cy="84.4" rx="8.6" ry="3.3" transform="rotate(-68 112.3 84.4)" fill="#f6c90c"/><ellipse cx="117.3" cy="86.1" rx="8.6" ry="3.3" transform="rotate(-44 117.3 86.1)" fill="#f6c90c"/><ellipse cx="121.2" cy="88.8" rx="8.6" ry="3.3" transform="rotate(-25 121.2 88.8)" fill="#f6c90c"/><ellipse cx="123.5" cy="92.3" rx="8.6" ry="3.3" transform="rotate(-10 123.5 92.3)" fill="#f6c90c"/><ellipse cx="108" cy="95" rx="10.4" ry="7.5" fill="#c5850c"/><ellipse cx="108" cy="95" rx="6.1" ry="4.2" fill="#dba21c"/><ellipse cx="163.9" cy="96.1" rx="8.6" ry="3.3" transform="rotate(4 163.9 96.1)" fill="#f6c90c"/><ellipse cx="162.4" cy="99.8" rx="8.6" ry="3.3" transform="rotate(18 162.4 99.8)" fill="#f6c90c"/><ellipse cx="159.1" cy="102.9" rx="8.6" ry="3.3" transform="rotate(35 159.1 102.9)" fill="#f6c90c"/><ellipse cx="154.6" cy="105.0" rx="8.6" ry="3.3" transform="rotate(57 154.6 105.0)" fill="#f6c90c"/><ellipse cx="149.2" cy="106.0" rx="8.6" ry="3.3" transform="rotate(84 149.2 106.0)" fill="#f6c90c"/><ellipse cx="143.7" cy="105.6" rx="8.6" ry="3.3" transform="rotate(112 143.7 105.6)" fill="#f6c90c"/><ellipse cx="138.7" cy="103.9" rx="8.6" ry="3.3" transform="rotate(136 138.7 103.9)" fill="#f6c90c"/><ellipse cx="134.8" cy="101.2" rx="8.6" ry="3.3" transform="rotate(155 134.8 101.2)" fill="#f6c90c"/><ellipse cx="132.5" cy="97.7" rx="8.6" ry="3.3" transform="rotate(170 132.5 97.7)" fill="#f6c90c"/><ellipse cx="132.1" cy="93.9" rx="8.6" ry="3.3" transform="rotate(-176 132.1 93.9)" fill="#f6c90c"/><ellipse cx="133.6" cy="90.2" rx="8.6" ry="3.3" transform="rotate(-162 133.6 90.2)" fill="#f6c90c"/><ellipse cx="136.9" cy="87.1" rx="8.6" ry="3.3" transform="rotate(-145 136.9 87.1)" fill="#f6c90c"/><ellipse cx="141.4" cy="85.0" rx="8.6" ry="3.3" transform="rotate(-123 141.4 85.0)" fill="#f6c90c"/><ellipse cx="146.8" cy="84.0" rx="8.6" ry="3.3" transform="rotate(-96 146.8 84.0)" fill="#f6c90c"/><ellipse cx="152.3" cy="84.4" rx="8.6" ry="3.3" transform="rotate(-68 152.3 84.4)" fill="#f6c90c"/><ellipse cx="157.3" cy="86.1" rx="8.6" ry="3.3" transform="rotate(-44 157.3 86.1)" fill="#f6c90c"/><ellipse cx="161.2" cy="88.8" rx="8.6" ry="3.3" transform="rotate(-25 161.2 88.8)" fill="#f6c90c"/><ellipse cx="163.5" cy="92.3" rx="8.6" ry="3.3" transform="rotate(-10 163.5 92.3)" fill="#f6c90c"/><ellipse cx="148" cy="95" rx="10.4" ry="7.5" fill="#c5850c"/><ellipse cx="148" cy="95" rx="6.1" ry="4.2" fill="#dba21c"/><ellipse cx="180.3" cy="93.2" rx="9.4" ry="3.6" transform="rotate(4 180.3 93.2)" fill="#f6c90c"/><ellipse cx="178.7" cy="97.2" rx="9.4" ry="3.6" transform="rotate(18 178.7 97.2)" fill="#f6c90c"/><ellipse cx="175.1" cy="100.6" rx="9.4" ry="3.6" transform="rotate(35 175.1 100.6)" fill="#f6c90c"/><ellipse cx="170.2" cy="102.9" rx="9.4" ry="3.6" transform="rotate(57 170.2 102.9)" fill="#f6c90c"/><ellipse cx="164.3" cy="104.0" rx="9.4" ry="3.6" transform="rotate(84 164.3 104.0)" fill="#f6c90c"/><ellipse cx="158.3" cy="103.6" rx="9.4" ry="3.6" transform="rotate(112 158.3 103.6)" fill="#f6c90c"/><ellipse cx="152.8" cy="101.7" rx="9.4" ry="3.6" transform="rotate(136 152.8 101.7)" fill="#f6c90c"/><ellipse cx="148.6" cy="98.8" rx="9.4" ry="3.6" transform="rotate(155 148.6 98.8)" fill="#f6c90c"/><ellipse cx="146.1" cy="95.0" rx="9.4" ry="3.6" transform="rotate(170 146.1 95.0)" fill="#f6c90c"/><ellipse cx="145.7" cy="90.8" rx="9.4" ry="3.6" transform="rotate(-176 145.7 90.8)" fill="#f6c90c"/><ellipse cx="147.3" cy="86.8" rx="9.4" ry="3.6" transform="rotate(-162 147.3 86.8)" fill="#f6c90c"/><ellipse cx="150.9" cy="83.4" rx="9.4" ry="3.6" transform="rotate(-145 150.9 83.4)" fill="#f6c90c"/><ellipse cx="155.8" cy="81.1" rx="9.4" ry="3.6" transform="rotate(-123 155.8 81.1)" fill="#f6c90c"/><ellipse cx="161.7" cy="80.0" rx="9.4" ry="3.6" transform="rotate(-96 161.7 80.0)" fill="#f6c90c"/><ellipse cx="167.7" cy="80.4" rx="9.4" ry="3.6" transform="rotate(-68 167.7 80.4)" fill="#f6c90c"/><ellipse cx="173.2" cy="82.3" rx="9.4" ry="3.6" transform="rotate(-44 173.2 82.3)" fill="#f6c90c"/><ellipse cx="177.4" cy="85.2" rx="9.4" ry="3.6" transform="rotate(-25 177.4 85.2)" fill="#f6c90c"/><ellipse cx="179.9" cy="89.0" rx="9.4" ry="3.6" transform="rotate(-10 179.9 89.0)" fill="#f6c90c"/><ellipse cx="163" cy="92" rx="11.4" ry="8.2" fill="#c5850c"/><ellipse cx="163" cy="92" rx="6.6" ry="4.6" fill="#dba21c"/><ellipse cx="207.5" cy="99.8" rx="6.2" ry="2.4" transform="rotate(4 207.5 99.8)" fill="#f6c90c"/><ellipse cx="206.4" cy="102.5" rx="6.2" ry="2.4" transform="rotate(18 206.4 102.5)" fill="#f6c90c"/><ellipse cx="204.1" cy="104.7" rx="6.2" ry="2.4" transform="rotate(35 204.1 104.7)" fill="#f6c90c"/><ellipse cx="200.8" cy="106.3" rx="6.2" ry="2.4" transform="rotate(57 200.8 106.3)" fill="#f6c90c"/><ellipse cx="196.9" cy="107.0" rx="6.2" ry="2.4" transform="rotate(84 196.9 107.0)" fill="#f6c90c"/><ellipse cx="192.9" cy="106.7" rx="6.2" ry="2.4" transform="rotate(112 192.9 106.7)" fill="#f6c90c"/><ellipse cx="189.2" cy="105.5" rx="6.2" ry="2.4" transform="rotate(136 189.2 105.5)" fill="#f6c90c"/><ellipse cx="186.4" cy="103.5" rx="6.2" ry="2.4" transform="rotate(155 186.4 103.5)" fill="#f6c90c"/><ellipse cx="184.8" cy="101.0" rx="6.2" ry="2.4" transform="rotate(170 184.8 101.0)" fill="#f6c90c"/><ellipse cx="184.5" cy="98.2" rx="6.2" ry="2.4" transform="rotate(-176 184.5 98.2)" fill="#f6c90c"/><ellipse cx="185.6" cy="95.5" rx="6.2" ry="2.4" transform="rotate(-162 185.6 95.5)" fill="#f6c90c"/><ellipse cx="187.9" cy="93.3" rx="6.2" ry="2.4" transform="rotate(-145 187.9 93.3)" fill="#f6c90c"/><ellipse cx="191.2" cy="91.7" rx="6.2" ry="2.4" transform="rotate(-123 191.2 91.7)" fill="#f6c90c"/><ellipse cx="195.1" cy="91.0" rx="6.2" ry="2.4" transform="rotate(-96 195.1 91.0)" fill="#f6c90c"/><ellipse cx="199.1" cy="91.3" rx="6.2" ry="2.4" transform="rotate(-68 199.1 91.3)" fill="#f6c90c"/><ellipse cx="202.8" cy="92.5" rx="6.2" ry="2.4" transform="rotate(-44 202.8 92.5)" fill="#f6c90c"/><ellipse cx="205.6" cy="94.5" rx="6.2" ry="2.4" transform="rotate(-25 205.6 94.5)" fill="#f6c90c"/><ellipse cx="207.2" cy="97.0" rx="6.2" ry="2.4" transform="rotate(-10 207.2 97.0)" fill="#f6c90c"/><ellipse cx="196" cy="99" rx="7.6" ry="5.4" fill="#c5850c"/><ellipse cx="196" cy="99" rx="4.4" ry="3.0" fill="#dba21c"/><ellipse cx="249.8" cy="96.3" rx="10.1" ry="3.9" transform="rotate(4 249.8 96.3)" fill="#f6c90c"/><ellipse cx="248.0" cy="100.6" rx="10.1" ry="3.9" transform="rotate(18 248.0 100.6)" fill="#f6c90c"/><ellipse cx="244.2" cy="104.3" rx="10.1" ry="3.9" transform="rotate(35 244.2 104.3)" fill="#f6c90c"/><ellipse cx="238.7" cy="106.9" rx="10.1" ry="3.9" transform="rotate(57 238.7 106.9)" fill="#f6c90c"/><ellipse cx="232.4" cy="108.0" rx="10.1" ry="3.9" transform="rotate(84 232.4 108.0)" fill="#f6c90c"/><ellipse cx="225.9" cy="107.5" rx="10.1" ry="3.9" transform="rotate(112 225.9 107.5)" fill="#f6c90c"/><ellipse cx="220.0" cy="105.6" rx="10.1" ry="3.9" transform="rotate(136 220.0 105.6)" fill="#f6c90c"/><ellipse cx="215.4" cy="102.3" rx="10.1" ry="3.9" transform="rotate(155 215.4 102.3)" fill="#f6c90c"/><ellipse cx="212.7" cy="98.2" rx="10.1" ry="3.9" transform="rotate(170 212.7 98.2)" fill="#f6c90c"/><ellipse cx="212.2" cy="93.7" rx="10.1" ry="3.9" transform="rotate(-176 212.2 93.7)" fill="#f6c90c"/><ellipse cx="214.0" cy="89.4" rx="10.1" ry="3.9" transform="rotate(-162 214.0 89.4)" fill="#f6c90c"/><ellipse cx="217.8" cy="85.7" rx="10.1" ry="3.9" transform="rotate(-145 217.8 85.7)" fill="#f6c90c"/><ellipse cx="223.3" cy="83.1" rx="10.1" ry="3.9" transform="rotate(-123 223.3 83.1)" fill="#f6c90c"/><ellipse cx="229.6" cy="82.0" rx="10.1" ry="3.9" transform="rotate(-96 229.6 82.0)" fill="#f6c90c"/><ellipse cx="236.1" cy="82.5" rx="10.1" ry="3.9" transform="rotate(-68 236.1 82.5)" fill="#f6c90c"/><ellipse cx="242.0" cy="84.4" rx="10.1" ry="3.9" transform="rotate(-44 242.0 84.4)" fill="#f6c90c"/><ellipse cx="246.6" cy="87.7" rx="10.1" ry="3.9" transform="rotate(-25 246.6 87.7)" fill="#f6c90c"/><ellipse cx="249.3" cy="91.8" rx="10.1" ry="3.9" transform="rotate(-10 249.3 91.8)" fill="#f6c90c"/><ellipse cx="231" cy="95" rx="12.3" ry="8.8" fill="#c5850c"/><ellipse cx="231" cy="95" rx="7.2" ry="4.9" fill="#dba21c"/><ellipse cx="278.0" cy="99.9" rx="7.0" ry="2.7" transform="rotate(4 278.0 99.9)" fill="#f6c90c"/><ellipse cx="276.8" cy="102.9" rx="7.0" ry="2.7" transform="rotate(18 276.8 102.9)" fill="#f6c90c"/><ellipse cx="274.1" cy="105.4" rx="7.0" ry="2.7" transform="rotate(35 274.1 105.4)" fill="#f6c90c"/><ellipse cx="270.4" cy="107.2" rx="7.0" ry="2.7" transform="rotate(57 270.4 107.2)" fill="#f6c90c"/><ellipse cx="266.0" cy="108.0" rx="7.0" ry="2.7" transform="rotate(84 266.0 108.0)" fill="#f6c90c"/><ellipse cx="261.5" cy="107.7" rx="7.0" ry="2.7" transform="rotate(112 261.5 107.7)" fill="#f6c90c"/><ellipse cx="257.4" cy="106.3" rx="7.0" ry="2.7" transform="rotate(136 257.4 106.3)" fill="#f6c90c"/><ellipse cx="254.2" cy="104.1" rx="7.0" ry="2.7" transform="rotate(155 254.2 104.1)" fill="#f6c90c"/><ellipse cx="252.4" cy="101.2" rx="7.0" ry="2.7" transform="rotate(170 252.4 101.2)" fill="#f6c90c"/><ellipse cx="252.0" cy="98.1" rx="7.0" ry="2.7" transform="rotate(-176 252.0 98.1)" fill="#f6c90c"/><ellipse cx="253.2" cy="95.1" rx="7.0" ry="2.7" transform="rotate(-162 253.2 95.1)" fill="#f6c90c"/><ellipse cx="255.9" cy="92.6" rx="7.0" ry="2.7" transform="rotate(-145 255.9 92.6)" fill="#f6c90c"/><ellipse cx="259.6" cy="90.8" rx="7.0" ry="2.7" transform="rotate(-123 259.6 90.8)" fill="#f6c90c"/><ellipse cx="264.0" cy="90.0" rx="7.0" ry="2.7" transform="rotate(-96 264.0 90.0)" fill="#f6c90c"/><ellipse cx="268.5" cy="90.3" rx="7.0" ry="2.7" transform="rotate(-68 268.5 90.3)" fill="#f6c90c"/><ellipse cx="272.6" cy="91.7" rx="7.0" ry="2.7" transform="rotate(-44 272.6 91.7)" fill="#f6c90c"/><ellipse cx="275.8" cy="93.9" rx="7.0" ry="2.7" transform="rotate(-25 275.8 93.9)" fill="#f6c90c"/><ellipse cx="277.6" cy="96.8" rx="7.0" ry="2.7" transform="rotate(-10 277.6 96.8)" fill="#f6c90c"/><ellipse cx="265" cy="99" rx="8.5" ry="6.1" fill="#c5850c"/><ellipse cx="265" cy="99" rx="5.0" ry="3.4" fill="#dba21c"/>
      </g>
    </svg>
  </div>
</div>

<!-- bottom strip -->
<div class="a" style="left:0;top:568px;width:900px;height:32px;background:#0e121a"></div>

<!-- time/meeting code -->
<div class="a" style="left:14px;top:533px;color:#fff;font-size:12px;font-weight:bold;white-space:nowrap">12:39</div>
<div class="a" style="left:51px;top:533px;width:1px;height:13px;background:#80868b"></div>
<div class="a" style="left:60px;top:533px;color:#fff;font-size:12px;font-weight:bold;letter-spacing:0.5px;white-space:nowrap">jei-tejt-qoz</div>

<!-- control buttons -->
<div class="btn" style="left:436px;background:#ea4335"></div>
<div class="btn" style="left:476px"></div>
<div class="btn" style="left:515px"></div>
<div class="btn" style="left:554px;background:#8ab4f8"></div>
<div class="btn" style="left:593px"></div>
<div class="btn" style="left:633px"></div>
<div class="btn" style="left:672px;width:42px;border-radius:16px;background:#ea4335"></div>

<!-- btn icons -->
<svg class="a" style="left:444.2px;top:533.0px" width="14.5" height="14.5" viewBox="0 0 24 24"><path fill="#fff" d="M19 11h-1.7c0 .74-.16 1.43-.43 2.05l1.23 1.23c.56-.98.9-2.09.9-3.28zm-4.02.17c0-.06.02-.11.02-.17V5c0-1.66-1.34-3-3-3S9 3.34 9 5v.18l5.98 5.99zM4.27 3L3 4.27l6.01 6.01V11c0 1.66 1.33 3 2.99 3 .22 0 .44-.03.65-.08l1.66 1.66c-.71.33-1.5.52-2.31.52-2.76 0-5.3-2.1-5.3-5.1H5c0 3.41 2.72 6.23 6 6.72V21h2v-3.28c.91-.13 1.77-.45 2.54-.9L19.73 21 21 19.73 4.27 3z"/></svg>
<svg class="a" style="left:481.9px;top:531.1px" width="18.7" height="18.7" viewBox="0 0 24 24"><path fill="#fff" d="M15 8v8H5V8h10m1-2H4c-.55 0-1 .45-1 1v10c0 .55.45 1 1 1h12c.55 0 1-.45 1-1v-3.5l4 4v-11l-4 4V7c0-.55-.45-1-1-1z"/></svg>
<svg class="a" style="left:520.6px;top:531.0px" width="19.2" height="19.2" viewBox="0 0 24 24"><path fill="#fff" d="M11.99 2C6.47 2 2 6.48 2 12s4.47 10 9.99 10C17.52 22 22 17.52 22 12S17.52 2 11.99 2zM12 20c-4.42 0-8-3.58-8-8s3.58-8 8-8 8 3.58 8 8-3.58 8-8 8zm3.5-9c.83 0 1.5-.67 1.5-1.5S16.33 8 15.5 8 14 8.67 14 9.5s.67 1.5 1.5 1.5zm-7 0c.83 0 1.5-.67 1.5-1.5S9.33 8 8.5 8 7 8.67 7 9.5 7.67 11 8.5 11zm3.5 6.5c2.33 0 4.31-1.46 5.11-3.5H6.89c.8 2.04 2.78 3.5 5.11 3.5z"/></svg>
<svg class="a" style="left:560.9px;top:531.5px" width="17.5" height="17.5" viewBox="0 0 24 24"><path fill="#0b1a33" d="M21 3H3c-1.11 0-2 .89-2 2v14c0 1.11.89 2 2 2h18c1.11 0 2-.89 2-2V5c0-1.11-.89-2-2-2zm0 16.02H3V4.98h18v14.04zM10 12H8l4-4 4 4h-2v4h-4v-4z"/></svg>
<svg class="a" style="left:599.4px;top:531.3px" width="18" height="18" viewBox="0 0 24 24"><path fill="#fff" d="M13 24c-3.26 0-6.19-1.99-7.4-5.02l-3.03-7.61C2.26 10.58 3 9.79 3.81 10.05l.79.26c.56.18 1.02.61 1.24 1.16L7.25 15H8V3.25C8 2.56 8.56 2 9.25 2s1.25.56 1.25 1.25V12h1V1.25C11.5.56 12.06 0 12.75 0S14 .56 14 1.25V12h1V2.75c0-.69.56-1.25 1.25-1.25s1.25.56 1.25 1.25V12h1V5.75c0-.69.56-1.25 1.25-1.25S21 5.06 21 5.75V16c0 4.42-3.58 8-8 8z"/></svg>
<svg class="a" style="left:638.0px;top:530.5px" width="19.5" height="19.5" viewBox="0 0 24 24"><path fill="#fff" d="M12 8c1.1 0 2-.9 2-2s-.9-2-2-2-2 .9-2 2 .9 2 2 2zm0 2c-1.1 0-2 .9-2 2s.9 2 2 2 2-.9 2-2-.9-2-2-2zm0 6c-1.1 0-2 .9-2 2s.9 2 2 2 2-.9 2-2-.9-2-2-2z"/></svg>
<svg class="a" style="left:683.6px;top:530.9px" width="19.2" height="19.2" viewBox="0 0 24 24"><path fill="#fff" d="M12 9c-1.6 0-3.15.25-4.6.72v3.1c0 .39-.23.74-.56.9-.98.49-1.87 1.12-2.66 1.85-.18.18-.43.28-.7.28-.28 0-.53-.11-.71-.29L.29 13.08c-.18-.17-.29-.42-.29-.7 0-.28.11-.53.29-.71C3.34 8.78 7.46 7 12 7s8.66 1.78 11.71 4.67c.18.18.29.43.29.71 0 .28-.11.53-.29.71l-2.48 2.48c-.18.18-.43.29-.71.29-.27 0-.52-.11-.7-.28-.79-.74-1.69-1.36-2.67-1.85-.33-.16-.56-.5-.56-.9v-3.1C15.15 9.25 13.6 9 12 9z"/></svg>
<!-- /btn icons -->
<!-- tiles -->
<!-- tile 1: Maryna Oskina (video) -->
<div class="tile" style="left:649px;top:90px;width:117px;height:97px;background:#4d9af1;border-radius:7px">
  <svg class="a" style="left:4px;top:4px;border-radius:3px" width="109" height="89" viewBox="1 1 109 89">
    <defs>
      <linearGradient id="bg1" x1="0" y1="0" x2="1" y2="0.2">
        <stop offset="0" stop-color="#5e6455"/><stop offset="0.5" stop-color="#656b5b"/><stop offset="1" stop-color="#6c7161"/>
      </linearGradient>
      <filter id="fb1"><feGaussianBlur stdDeviation="1.6"/></filter>
      <filter id="fb1b" x="-80%" y="-80%" width="260%" height="260%"><feGaussianBlur stdDeviation="4"/></filter>
    </defs>
    <rect width="111" height="91" fill="url(#bg1)"/>
    <ellipse cx="30" cy="38" rx="10" ry="5" fill="#3f4438" filter="url(#fb1b)"/>
    <g filter="url(#fb1)">
      <path d="M37 66 Q34 40 41 22 Q50 3 70 2 Q92 3 98 24 Q101 40 97 50 Q104 56 108 60 L96 64 Q88 58 86 50 L46 50 L48 68 Z" fill="#8e4633"/>
      <ellipse cx="67" cy="38" rx="20.5" ry="27" fill="#d6a596"/>
      <path d="M43 22 Q52 6 72 8 Q86 10 90 24 Q84 14 70 13 Q54 13 46 24 Z" fill="#8e4633"/>
      <path d="M10 91 Q16 70 40 57 L52 66 Q66 74 82 62 L88 52 Q104 52 111 60 L111 91 Z" fill="#a1b6d4"/>
      <path d="M49 56 Q66 70 84 54 L84 91 L48 91 Z" fill="#c9b9a5"/>
    </g>
    <g fill="none" stroke="#3b2c28" stroke-width="1.7" filter="url(#fb1)" opacity="0.9">
      <rect x="45" y="20" width="19" height="12" rx="4"/>
      <rect x="67" y="19" width="19" height="12" rx="4"/>
      <path d="M64 25 L67 25"/>
    </g>
    <ellipse cx="66" cy="47" rx="6" ry="2.6" fill="#b9505a" filter="url(#fb1)"/>
  </svg>
  <div class="a" style="left:88px;top:9px;width:19px;height:19px;border-radius:50%;background:#1a73e8"></div>
  <div class="a" style="left:92.5px;top:15px;width:3px;height:7px;border-radius:2px;background:#fff"></div>
  <div class="a" style="left:96.5px;top:12.5px;width:3px;height:12px;border-radius:2px;background:#fff"></div>
  <div class="a" style="left:100.5px;top:15px;width:3px;height:7px;border-radius:2px;background:#fff"></div>
  <div class="nm" style="left:12px;top:75px">Maryna Oskina</div>
</div>

<!-- tile 2: Елена -->
<div class="tile" style="left:775px;top:90px;width:117px;height:97px">
  <svg class="a" style="left:41px;top:30px" width="35" height="35" viewBox="0 0 35 35">
    <defs><clipPath id="c2"><circle cx="17.5" cy="17.5" r="17.3"/></clipPath><filter id="fb2"><feGaussianBlur stdDeviation="0.6"/></filter></defs>
    <g clip-path="url(#c2)" filter="url(#fb2)">
      <rect width="35" height="35" fill="#8c8c8c"/>
      <path d="M20 0 H35 V35 H22 Q30 20 22 8 Z" fill="#25232e"/>
      <path d="M21 6 Q30 9 34 19" stroke="#8a9aa8" stroke-width="1.3" fill="none"/>
      <path d="M23 20 Q28 23 34 21" stroke="#6a72b8" stroke-width="1.4" fill="none"/>
      <path d="M26 26 Q30 28 34 26" stroke="#b08040" stroke-width="1.2" fill="none"/>
      <path d="M10 31 Q8 10 18 9 Q28 10 26 31 Z" fill="#3b2420"/>
      <ellipse cx="18" cy="18.5" rx="5.3" ry="6.6" fill="#dfb0a4"/>
      <path d="M12 15 Q18 9 24 14 L24 11 Q18 7 12 12 Z" fill="#3b2420"/>
      <path d="M2 35 L5 28 Q11 25 16 30 Q22 26 29 28 L31 35 Z" fill="#e12a1e"/>
      <path d="M15 30 L18 35 L21 30 Z" fill="#d9a090"/>
    </g>
  </svg>
  <div class="mute" style="left:89px;top:10px"></div>
<svg class="a" style="left:90.5px;top:11.5px" width="14" height="14" viewBox="0 0 24 24"><path fill="#fff" d="M19 11h-1.7c0 .74-.16 1.43-.43 2.05l1.23 1.23c.56-.98.9-2.09.9-3.28zm-4.02.17c0-.06.02-.11.02-.17V5c0-1.66-1.34-3-3-3S9 3.34 9 5v.18l5.98 5.99zM4.27 3L3 4.27l6.01 6.01V11c0 1.66 1.33 3 2.99 3 .22 0 .44-.03.65-.08l1.66 1.66c-.71.33-1.5.52-2.31.52-2.76 0-5.3-2.1-5.3-5.1H5c0 3.41 2.72 6.23 6 6.72V21h2v-3.28c.91-.13 1.77-.45 2.54-.9L19.73 21 21 19.73 4.27 3z"/></svg>
  <div class="nm" style="left:12px;top:75px">Елена Бордюго...</div>
</div>

<!-- tile 3: Лиза -->
<div class="tile" style="left:649px;top:196px;width:117px;height:97px">
  <svg class="a" style="left:41px;top:30.5px" width="35" height="35" viewBox="0 0 35 35">
    <defs><clipPath id="c3"><circle cx="17.5" cy="17.5" r="17.3"/></clipPath><filter id="fb3"><feGaussianBlur stdDeviation="1"/></filter>
    <radialGradient id="g3" cx="0.5" cy="0.45" r="0.55"><stop offset="0" stop-color="#301640"/><stop offset="0.65" stop-color="#45205a"/><stop offset="1" stop-color="#7a3290"/></radialGradient></defs>
    <g clip-path="url(#c3)" filter="url(#fb3)">
      <rect width="35" height="35" fill="url(#g3)"/>
      <path d="M6 35 Q7 6 18 5 Q29 6 29 35 Z" fill="#120812"/>
      <ellipse cx="18.5" cy="15.5" rx="5.5" ry="7.5" fill="#3e2260"/>
      <rect x="0" y="26" width="35" height="9" fill="#170a1a"/>
    </g>
  </svg>
  <div class="mute" style="left:89px;top:10px"></div>
<svg class="a" style="left:90.5px;top:11.5px" width="14" height="14" viewBox="0 0 24 24"><path fill="#fff" d="M19 11h-1.7c0 .74-.16 1.43-.43 2.05l1.23 1.23c.56-.98.9-2.09.9-3.28zm-4.02.17c0-.06.02-.11.02-.17V5c0-1.66-1.34-3-3-3S9 3.34 9 5v.18l5.98 5.99zM4.27 3L3 4.27l6.01 6.01V11c0 1.66 1.33 3 2.99 3 .22 0 .44-.03.65-.08l1.66 1.66c-.71.33-1.5.52-2.31.52-2.76 0-5.3-2.1-5.3-5.1H5c0 3.41 2.72 6.23 6 6.72V21h2v-3.28c.91-.13 1.77-.45 2.54-.9L19.73 21 21 19.73 4.27 3z"/></svg>
  <div class="nm" style="left:12px;top:75px">Лиза Ветрова</div>
</div>

<!-- tile 4: Стрижак -->
<div class="tile" style="left:775px;top:196px;width:117px;height:97px">
  <svg class="a" style="left:41px;top:31px" width="35" height="35" viewBox="0 0 35 35">
    <defs><clipPath id="c4"><circle cx="17.5" cy="17.5" r="17.3"/></clipPath><filter id="fb4"><feGaussianBlur stdDeviation="0.7"/></filter></defs>
    <g clip-path="url(#c4)" filter="url(#fb4)">
      <rect width="35" height="35" fill="#b3b3b5"/>
      <path d="M16 3 Q23 12 18 20 Q15 28 21 35" stroke="#d6d6d8" stroke-width="3" fill="none"/>
      <path d="M3 12 Q6 20 4 28" stroke="#e2e2e2" stroke-width="2.5" fill="none"/>
      <path d="M26 5 Q28 18 25 32" stroke="#c4c4c6" stroke-width="2" fill="none"/>
      <path d="M8 30 Q12 24 10 16" stroke="#9c9c9e" stroke-width="1.5" fill="none"/>
      <circle cx="13" cy="7" r="1.1" fill="#444"/>
    </g>
  </svg>
  <div class="mute" style="left:89px;top:10px"></div>
<svg class="a" style="left:90.5px;top:11.5px" width="14" height="14" viewBox="0 0 24 24"><path fill="#fff" d="M19 11h-1.7c0 .74-.16 1.43-.43 2.05l1.23 1.23c.56-.98.9-2.09.9-3.28zm-4.02.17c0-.06.02-.11.02-.17V5c0-1.66-1.34-3-3-3S9 3.34 9 5v.18l5.98 5.99zM4.27 3L3 4.27l6.01 6.01V11c0 1.66 1.33 3 2.99 3 .22 0 .44-.03.65-.08l1.66 1.66c-.71.33-1.5.52-2.31.52-2.76 0-5.3-2.1-5.3-5.1H5c0 3.41 2.72 6.23 6 6.72V21h2v-3.28c.91-.13 1.77-.45 2.54-.9L19.73 21 21 19.73 4.27 3z"/></svg>
  <div class="nm" style="left:12px;top:75px">Стрижак Марія</div>
</div>

<!-- tile 5: Дима -->
<div class="tile" style="left:649px;top:302px;width:117px;height:97px">
  <div class="a" style="left:41px;top:31.5px;width:35px;height:35px;border-radius:50%;background:#137b2c;color:#fff;font-size:21px;text-align:center;line-height:30px">Д</div>
  <div class="mute" style="left:89px;top:10px"></div>
<svg class="a" style="left:90.5px;top:11.5px" width="14" height="14" viewBox="0 0 24 24"><path fill="#fff" d="M19 11h-1.7c0 .74-.16 1.43-.43 2.05l1.23 1.23c.56-.98.9-2.09.9-3.28zm-4.02.17c0-.06.02-.11.02-.17V5c0-1.66-1.34-3-3-3S9 3.34 9 5v.18l5.98 5.99zM4.27 3L3 4.27l6.01 6.01V11c0 1.66 1.33 3 2.99 3 .22 0 .44-.03.65-.08l1.66 1.66c-.71.33-1.5.52-2.31.52-2.76 0-5.3-2.1-5.3-5.1H5c0 3.41 2.72 6.23 6 6.72V21h2v-3.28c.91-.13 1.77-.45 2.54-.9L19.73 21 21 19.73 4.27 3z"/></svg>
  <div class="nm" style="left:12px;top:75px">Дима Кулиш</div>
</div>

<!-- tile 6: Ганна (video) -->
<div class="tile" style="left:775px;top:302px;width:117px;height:98px;border-radius:7px">
  <svg class="a" style="left:0;top:0" width="117" height="98" viewBox="0 0 117 98">
    <defs><filter id="fb6"><feGaussianBlur stdDeviation="0.9"/></filter>
      <linearGradient id="w6" x1="0" y1="0" x2="0" y2="1"><stop offset="0" stop-color="#bde9dc"/><stop offset="0.5" stop-color="#cff1e8"/><stop offset="1" stop-color="#bde6dc"/></linearGradient></defs>
    <rect width="117" height="98" fill="url(#w6)"/>
    <g filter="url(#fb6)">
      <rect x="0" y="9" width="25" height="42" fill="#9a8458"/>
      <rect x="1" y="11" width="22" height="38" fill="#c5dff0"/>
      <circle cx="13" cy="38" r="4" fill="#3a8a5a"/>
      <path d="M4 18 H20 M4 22 H18 M4 26 H20" stroke="#6a8ab0" stroke-width="1"/>
      <rect x="35" y="10" width="30" height="44" fill="#5a4a3a"/>
      <rect x="38" y="13" width="25" height="38" fill="#c3def2"/>
      <path d="M42 22 H58 M42 27 H58 M42 32 H56" stroke="#6a8ab0" stroke-width="1"/>
      <rect x="78" y="8" width="30" height="10" fill="#9a8a5a"/>
      <rect x="40" y="75" width="30" height="23" fill="#b8d8ee"/>
      <path d="M56 52 Q58 24 76 14 Q96 8 117 20 L117 98 L52 98 Q58 76 56 52 Z" fill="#151417"/>
      <ellipse cx="89" cy="64" rx="20" ry="25" fill="#cf9384"/>
      <path d="M66 48 Q88 38 112 47 L112 20 L66 20 Z" fill="#151417"/>
      <path d="M36 98 Q46 84 78 86 L96 98 Z" fill="#18171a"/>
      <path d="M92 76 Q104 68 114 76 L117 98 L98 98 Z" fill="#e2c2a2"/>
    </g>
  </svg>
  <svg class="a" style="left:90.5px;top:11.5px" width="14" height="14" viewBox="0 0 24 24"><path fill="#fff" d="M19 11h-1.7c0 .74-.16 1.43-.43 2.05l1.23 1.23c.56-.98.9-2.09.9-3.28zm-4.02.17c0-.06.02-.11.02-.17V5c0-1.66-1.34-3-3-3S9 3.34 9 5v.18l5.98 5.99zM4.27 3L3 4.27l6.01 6.01V11c0 1.66 1.33 3 2.99 3 .22 0 .44-.03.65-.08l1.66 1.66c-.71.33-1.5.52-2.31.52-2.76 0-5.3-2.1-5.3-5.1H5c0 3.41 2.72 6.23 6 6.72V21h2v-3.28c.91-.13 1.77-.45 2.54-.9L19.73 21 21 19.73 4.27 3z"/></svg>
  <div class="nm" style="left:12px;top:75px">Ганна</div>
</div>

<!-- tile 7: Виктория -->
<div class="tile" style="left:720px;top:409px;width:172px;height:97px">
  <svg class="a" style="left:60px;top:23.5px" width="50" height="50" viewBox="0 0 50 50">
    <defs><clipPath id="c7"><circle cx="25" cy="25" r="25"/></clipPath><filter id="fb7"><feGaussianBlur stdDeviation="1.2"/></filter></defs>
    <g clip-path="url(#c7)" filter="url(#fb7)">
      <rect width="50" height="50" fill="#3b2e29"/>
      <path d="M0 0 H50 V26 Q36 6 14 8 Q4 10 0 14 Z" fill="#55473d"/>
      <path d="M5 16 Q12 8 24 14 Q20 20 12 20 Q8 22 7 28 Q4 24 5 16 Z" fill="#d8a078"/>
      <path d="M12 20 Q24 14 32 22 Q38 32 30 42 Q20 48 12 40 Q8 30 12 20 Z" fill="#c47650"/>
      <path d="M4 28 Q8 24 12 30 L10 40 Q4 38 4 28 Z" fill="#2a1d1a"/>
      <ellipse cx="26.5" cy="26" rx="2.4" ry="1.8" fill="#241614"/>
      <ellipse cx="20" cy="38" rx="3.5" ry="1.8" fill="#7a3030"/>
      <path d="M32 18 Q46 24 50 50 H24 Q36 40 34 28 Z" fill="#2e2322"/>
      <path d="M0 42 Q10 46 20 50 H0 Z" fill="#2a201e"/>
    </g>
  </svg>
  <div class="mute" style="left:143px;top:9px"></div>
<svg class="a" style="left:144.5px;top:10.5px" width="14" height="14" viewBox="0 0 24 24"><path fill="#fff" d="M19 11h-1.7c0 .74-.16 1.43-.43 2.05l1.23 1.23c.56-.98.9-2.09.9-3.28zm-4.02.17c0-.06.02-.11.02-.17V5c0-1.66-1.34-3-3-3S9 3.34 9 5v.18l5.98 5.99zM4.27 3L3 4.27l6.01 6.01V11c0 1.66 1.33 3 2.99 3 .22 0 .44-.03.65-.08l1.66 1.66c-.71.33-1.5.52-2.31.52-2.76 0-5.3-2.1-5.3-5.1H5c0 3.41 2.72 6.23 6 6.72V21h2v-3.28c.91-.13 1.77-.45 2.54-.9L19.73 21 21 19.73 4.27 3z"/></svg>
  <div class="nm" style="left:12px;top:76px">Виктория Фучижий</div>
</div>
</body></html>
